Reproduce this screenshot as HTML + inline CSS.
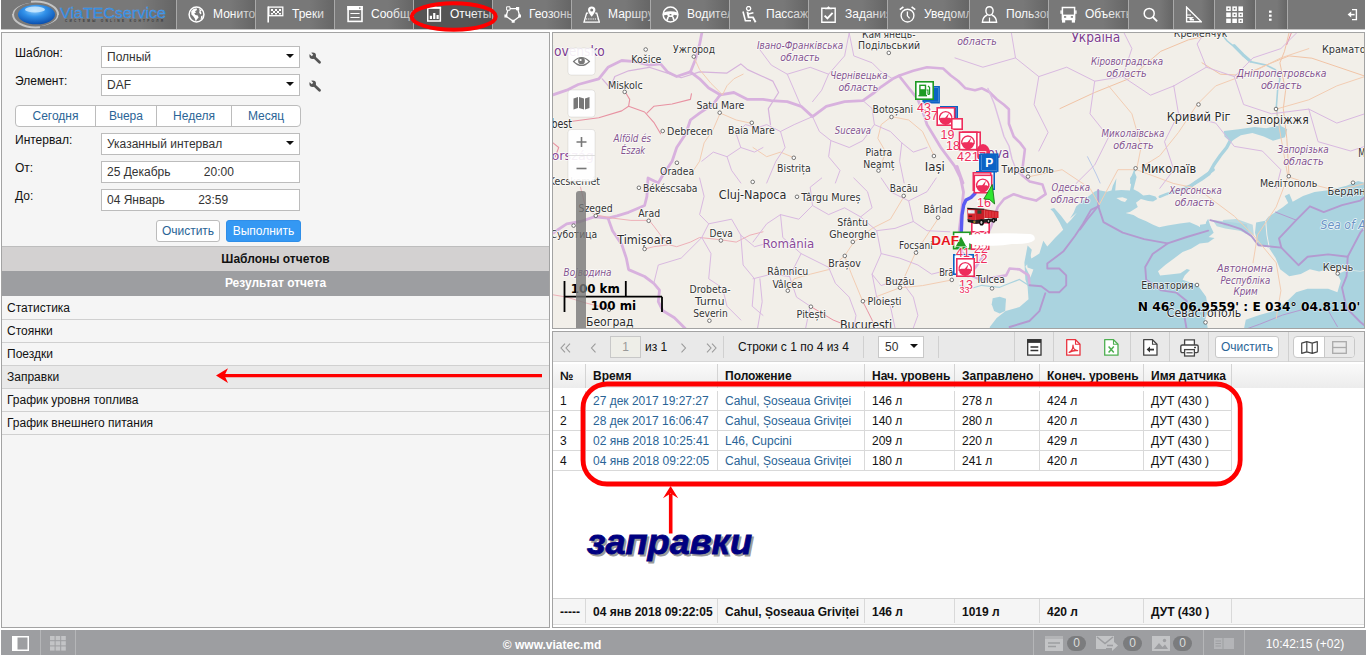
<!DOCTYPE html>
<html><head><meta charset="utf-8">
<style>
*{box-sizing:border-box;margin:0;padding:0}
html,body{width:1366px;height:655px;overflow:hidden;background:#fff;font-family:"Liberation Sans",sans-serif;font-size:12px;color:#111}
.abs{position:absolute}
#top{position:absolute;left:0;top:0;width:1365px;height:29px;background:#787878;overflow:hidden}
.mi{position:absolute;top:0;height:29px;overflow:hidden;color:#fff;font-size:12px;line-height:28px;white-space:nowrap;border-left:1px solid #a9a9a9}
.mi:after{content:"";position:absolute;right:0;top:0;width:32%;height:100%;background:linear-gradient(to right,rgba(70,70,70,0),rgba(70,70,70,.36))}
.mi svg{position:absolute;left:11px;top:6px;width:17px;height:17px}
.mi span{position:absolute;left:36px;top:0}
.mi.act{background:#555}
.nog:after{display:none}
#lp{position:absolute;left:1px;top:32px;width:549px;height:596px;border:1px solid #a3a3a3;background:#f5f5f5}
.lbl{position:absolute;left:13px;font-size:12px;color:#111}
.sel{position:absolute;left:99px;width:199px;height:22px;border:1px solid #bcbcbc;background:#fff;font-size:12px;line-height:20px;padding-left:5px;color:#333;white-space:nowrap}
.sel:after{content:"";position:absolute;right:5px;top:7px;border:4px solid transparent;border-top:4px solid #111;border-bottom:0}
.inp{position:absolute;left:99px;width:199px;height:22px;border:1px solid #bcbcbc;background:#fff;font-size:12px;line-height:20px;padding-left:5px;color:#333;white-space:pre}
.hdr{position:absolute;left:0;width:547px;text-align:center;font-weight:bold;font-size:12px}
.row{position:absolute;left:0;width:547px;height:23px;line-height:22px;padding-left:5px;border-bottom:1px solid #d0d0d0;font-size:12px;color:#111}
#bot{position:absolute;left:1px;top:630px;width:1365px;height:25px;background:#9d9ea1;color:#fff}
#map{position:absolute;left:552px;top:32px;width:813px;height:297px;border:1px solid #a3a3a3;background:#f2efe9;overflow:hidden}
#tp{position:absolute;left:552px;top:331px;width:813px;height:297px;border:1px solid #a3a3a3;background:#fff;overflow:hidden}

#tb{position:absolute;left:0;top:0;width:811px;height:30px;background:#e9e9e9;border-bottom:1px solid #d6d6d6}
.tsep{position:absolute;top:4px;height:22px;width:1px;background:#d0d0d0}
.nav{position:absolute;top:6px;font-size:17px;line-height:17px;color:#9a9a9a;font-family:"DejaVu Sans",sans-serif}
.th{position:absolute;top:32px;height:24px;line-height:25px;font-weight:bold;font-size:12px;color:#111;background:linear-gradient(#fafafa,#ececec);border-right:1px solid #d4d4d4;padding-left:7px;white-space:nowrap;overflow:hidden}
.tr{position:absolute;left:0;width:680px;height:20px}
.td{position:absolute;top:0;height:20px;line-height:20px;font-size:12px;color:#111;padding-left:7px;border-right:1px solid #d9d9d9;border-bottom:1px solid #d9d9d9;white-space:nowrap;overflow:hidden}
.td.b{color:#2a6496}
.tf .td{font-weight:bold;height:24px;line-height:27px;border-bottom:0;background:#f5f5f5}
.bdg{position:absolute;top:6px;width:19px;height:15px;border-radius:8px;background:#7b7c7e;color:#dcdcdc;font-size:12px;line-height:15px;text-align:center}
</style></head><body>
<div id="top">
<div id="logo" class="abs" style="left:0;top:0;width:176px;height:29px;border-left:1px solid #fff;background:linear-gradient(to right,rgba(0,0,0,0) 80%,rgba(0,0,0,.16) 100%)">
<svg class="abs" style="left:0;top:0" width="175" height="29" viewBox="0 0 175 29">
<defs><radialGradient id="lg1" cx="0.45" cy="0.3" r="0.7"><stop offset="0" stop-color="#8fd0ff"/><stop offset="0.45" stop-color="#2f8fe8"/><stop offset="1" stop-color="#0b4fae"/></radialGradient></defs>
<ellipse cx="34.5" cy="14.5" rx="22.5" ry="13" fill="none" stroke="#c4c4c4" stroke-width="2"/>
<path d="M10 14 A24 13 0 0 1 30 1.2" fill="none" stroke="#787878" stroke-width="3"/>
<path d="M59 15 A24 13 0 0 1 39 27.8" fill="none" stroke="#787878" stroke-width="3"/>
<ellipse cx="35.5" cy="14.5" rx="18.5" ry="9.8" fill="url(#lg1)"/>
<ellipse cx="34" cy="9.5" rx="10" ry="3" fill="#d8efff" opacity=".75"/>
<text x="59" y="18.4" font-family="Liberation Sans, sans-serif" font-size="15" fill="#2b85dd" textLength="106" lengthAdjust="spacingAndGlyphs" stroke="#5aa5ee" stroke-width=".3">ViaTECservice</text>
<text x="64" y="22" font-family="Liberation Sans, sans-serif" font-size="3.2" font-weight="bold" fill="#3a3a3a" textLength="98" lengthAdjust="spacing">СИСТЕМЫ ONLINE КОНТРОЛЯ</text>
</svg></div>
<div class="mi" style="left:176px;width:79px"><svg viewBox="0 0 17 17" id="ic0"><circle cx="8.5" cy="8.5" r="7.4" fill="none" stroke="#fff" stroke-width="1.5"/><path d="M3.2 5.2 L5.5 3 L8.5 2.2 L9 4 L7 5.2 L8 6.5 L6.2 7.5 L7.5 9 L9.8 9.6 L10.6 11.4 L8.8 13.6 L7.8 15.4 L6.8 12.6 L5.2 10.2 L3.4 8.4 Z M11 2.5 L13.8 4.4 L12.6 5.4 L13.6 7.2 L12.4 8.4 L11.2 6.6 L11.6 4.6 Z M13.2 10 L14.8 9.6 L14 12.4 L12.6 13.4 Z" fill="#fff"/></svg><span>Мониторинг</span></div>
<div class="mi" style="left:255px;width:79px"><svg viewBox="0 0 17 17" id="ic1"><path d="M1.2 0.5 V16.5" stroke="#fff" stroke-width="1.6" fill="none"/><rect x="1.8" y="1.1" width="14" height="8.6" fill="none" stroke="#fff" stroke-width="1.3"/><path d="M4 3h2v2h-2z M8 3h2v2h-2z M12 3h2v2h-2z M6 5h2v2h-2z M10 5h2v2h-2z M4 7h2v1.5h-2z M8 7h2v1.5h-2z M12 7h2v1.5h-2z" fill="#fff"/></svg><span>Треки</span></div>
<div class="mi" style="left:334px;width:79px"><svg viewBox="0 0 17 17" id="ic2"><rect x="2.1" y=".7" width="13.9" height="14.7" fill="none" stroke="#fff" stroke-width="1.6"/><rect x="1.3" y="-.1" width="15.5" height="4.2" fill="#fff"/><circle cx="13.8" cy="2" r=".85" fill="#787878"/><path d="M4.4 7.5 H13.6 M4.4 11.5 H13.6" stroke="#fff" stroke-width="1.1"/></svg><span>Сообщения</span></div>
<div class="mi act" style="left:413px;width:79px"><svg viewBox="0 0 17 17" id="ic3"><rect x="2.75" y="1.6" width="12.6" height="13.4" fill="none" stroke="#fff" stroke-width="1.5"/><path d="M5.6 1 L9 -.5 L12.4 1 Z" fill="#fff"/><rect x="2" y=".8" width="14.1" height="2" fill="#fff"/><path d="M5.9 12.9 V9.7 M9.25 12.9 V6.9 M12.6 12.9 V8.9" stroke="#fff" stroke-width="2.2"/></svg><span>Отчеты</span></div>
<div class="mi" style="left:492px;width:79px"><svg viewBox="0 0 17 17" id="ic4"><path d="M4.4 2.6 L13.6 2.6 L15.8 10.2 L9.2 15.2 L2 10.2 Z" fill="none" stroke="#fff" stroke-width="1.3"/><path d="M2.6 .8h3.4v3.4h-3.4z" fill="#787878" stroke="#fff" stroke-width="1"/><path d="M12 1h3.2v3.2h-3.2z M14.2 8.6h3v3h-3z M7.7 13.7h3v3h-3z M.4 8.6h3v3h-3z" fill="#fff"/></svg><span>Геозоны</span></div>
<div class="mi" style="left:571px;width:79px"><svg viewBox="0 0 17 17" id="ic5"><path d="M5.2 7.2 H3.6 L1 16.2 H16.4 L13.8 7.2 H12.2" fill="none" stroke="#fff" stroke-width="1.3"/><path d="M8.7 0.4 A3.7 3.7 0 0 0 5 4.1 C5 6.6 8.7 10.8 8.7 10.8 C8.7 10.8 12.4 6.6 12.4 4.1 A3.7 3.7 0 0 0 8.7 0.4 Z M8.7 2.6 A1.5 1.5 0 0 1 8.7 5.6 A1.5 1.5 0 0 1 8.7 2.6 Z" fill="#fff" fill-rule="evenodd"/><path d="M3 13 H14.6" stroke="#fff" stroke-width="1.2" stroke-dasharray="1.2 1"/></svg><span>Маршруты</span></div>
<div class="mi" style="left:650px;width:79px"><svg viewBox="0 0 17 17" id="ic6"><circle cx="8.5" cy="8.5" r="7.4" fill="none" stroke="#fff" stroke-width="1.5"/><path d="M1.4 6.6 Q8.5 4 15.6 6.6 L15.6 9.4 L11.8 8.8 L11 11 L6 11 L5.2 8.8 L1.4 9.4 Z" fill="#fff"/><path d="M6.2 11 L4.8 14.8 M10.8 11 L12.2 14.8" stroke="#fff" stroke-width="1.7"/><rect x="7.6" y="8" width="1.8" height="1.4" fill="#787878"/></svg><span>Водители</span></div>
<div class="mi" style="left:729px;width:79px"><svg viewBox="0 0 17 17" id="ic7"><circle cx="7.6" cy="2.6" r="2.1" fill="none" stroke="#fff" stroke-width="1.3"/><path d="M2 5.5 L4.4 14.8 H10" fill="none" stroke="#fff" stroke-width="1.6"/><path d="M6.4 5.6 L7.6 11.4 H12 L14.6 16.2" fill="none" stroke="#fff" stroke-width="1.9"/><path d="M7.2 8 L12.4 6.8" stroke="#fff" stroke-width="1.4"/></svg><span>Пассажиры</span></div>
<div class="mi" style="left:808px;width:79px"><svg viewBox="0 0 17 17" id="ic8"><path d="M5 2.2 H1.8 V16.2 H15.2 V2.2 H12" fill="none" stroke="#fff" stroke-width="1.4"/><path d="M5 3.2 V1.4 H7 L8.5 0.3 L10 1.4 H12 V3.2 Z" fill="#fff"/><path d="M4.6 9.6 L7.4 12.4 L12.6 6.8" fill="none" stroke="#fff" stroke-width="1.9"/></svg><span>Задания</span></div>
<div class="mi" style="left:887px;width:82px"><svg viewBox="0 0 17 17" id="ic9"><circle cx="8.5" cy="9.6" r="6.4" fill="none" stroke="#fff" stroke-width="1.4"/><path d="M8.4 5.6 V9.8 L10.6 12.4" fill="none" stroke="#fff" stroke-width="1.3"/><path d="M0.8 3.6 L4.4 0.8 M12.6 0.8 L16.2 3.6" stroke="#fff" stroke-width="1.7"/></svg><span>Уведомления</span></div>
<div class="mi" style="left:969px;width:79px"><svg viewBox="0 0 17 17" id="ic10"><path d="M8.5 0.8 C6.2 0.8 4.9 2.6 4.9 4.8 C4.9 7 6.3 9.2 8.5 9.2 C10.7 9.2 12.1 7 12.1 4.8 C12.1 2.6 10.8 0.8 8.5 0.8 Z" fill="none" stroke="#fff" stroke-width="1.4"/><path d="M6.2 9 C3.4 10.2 1.6 12 1.4 16.2 H15.6 C15.4 12 13.6 10.2 10.8 9" fill="none" stroke="#fff" stroke-width="1.4"/><path d="M8.5 11.5 V16" stroke="#fff" stroke-width="1.2"/></svg><span>Пользователи</span></div>
<div class="mi" style="left:1048px;width:80px"><svg viewBox="0 0 17 17" id="ic11"><path d="M2.4 1.4 H14.6 V13.6 H2.4 Z" fill="none" stroke="#fff" stroke-width="1.5"/><rect x="2.4" y="8.6" width="12.2" height="5" fill="#fff"/><rect x="2" y="13" width="3.2" height="3.6" fill="#fff"/><rect x="11.8" y="13" width="3.2" height="3.6" fill="#fff"/><rect x="0.4" y="4.4" width="1.4" height="3.4" fill="#fff"/><rect x="15.2" y="4.4" width="1.4" height="3.4" fill="#fff"/><rect x="4" y="10.2" width="2.2" height="1.5" fill="#787878"/><rect x="10.8" y="10.2" width="2.2" height="1.5" fill="#787878"/></svg><span>Объекты</span></div>
<div class="mi" style="left:1128px;width:45px"><svg viewBox="0 0 17 17" id="ib0" style="left:13px"><circle cx="7.2" cy="7.4" r="5" fill="none" stroke="#fff" stroke-width="1.5"/><path d="M10.8 11 L15.2 15.4" stroke="#fff" stroke-width="1.8"/></svg></div>
<div class="mi" style="left:1173px;width:41px"><svg viewBox="0 0 17 17" id="ib1" style="left:11px"><path d="M1.6 1.2 V15.8 H16.4 Z" fill="none" stroke="#fff" stroke-width="1.4"/><path d="M2 9 H6 M2 11.6 H8.4 M5 11.8 V14 H9 Z" fill="#fff" stroke="#fff" stroke-width="1"/></svg></div>
<div class="mi" style="left:1214px;width:41px"><svg viewBox="0 0 17 17" id="ib2" style="left:11px"><rect x="0.2" y="0.4" width="4.6" height="4.6" fill="#fff"/><rect x="6.3" y="0.4" width="4.6" height="4.6" fill="#fff"/><rect x="12.399999999999999" y="0.4" width="4.6" height="4.6" fill="#fff"/><rect x="0.2" y="6.5" width="4.6" height="4.6" fill="#fff"/><rect x="6.3" y="6.5" width="4.6" height="4.6" fill="#fff"/><rect x="12.399999999999999" y="6.5" width="4.6" height="4.6" fill="#fff"/><rect x="0.2" y="12.6" width="4.6" height="4.6" fill="#fff"/><rect x="6.3" y="12.6" width="4.6" height="4.6" fill="#fff"/><rect x="12.399999999999999" y="12.6" width="4.6" height="4.6" fill="#fff"/><rect x="1.7" y="1.9" width="1.6" height="1.6" fill="#787878"/><rect x="7.8" y="1.9" width="1.6" height="1.6" fill="#787878"/><rect x="7.8" y="8.0" width="1.6" height="1.6" fill="#787878"/><rect x="13.899999999999999" y="8.0" width="1.6" height="1.6" fill="#787878"/><rect x="13.899999999999999" y="14.1" width="1.6" height="1.6" fill="#787878"/></svg></div>
<div class="mi" style="left:1255px;width:32px"><svg viewBox="0 0 17 17" id="ib3" style="left:6px"><rect x="7" y="4.6" width="2.6" height="2.2" fill="#fff"/><rect x="7" y="8.6" width="2.6" height="2.2" fill="#fff"/><rect x="7" y="12.6" width="2.6" height="2.2" fill="#fff"/></svg></div>
<div class="mi nog" style="left:1287px;width:78px"><svg viewBox="0 0 17 17" id="ib4" style="left:57px"><path d="M7 3.6 H11.4 V13.6 H7" fill="none" stroke="#fff" stroke-width="1.4"/><path d="M5 8.6 H9.6" fill="none" stroke="#fff" stroke-width="1.5"/><path d="M2.6 8.6L6.2 5.6V11.6Z" fill="#fff"/></svg></div>
</div>
<div class="abs" style="left:1px;top:29px;width:1364px;height:1px;background:#c4c4c4"></div>
<div id="lp">
<div class="lbl" style="top:13px">Шаблон:</div>
<div class="sel" style="top:13px">Полный</div>
<svg class="abs wr" style="left:307px;top:18.5px" width="12" height="12" viewBox="0 0 12 12"><path d="M5 5L10.5 10.2" stroke="#555" stroke-width="2.7" stroke-linecap="round" fill="none"/><circle cx="3.7" cy="3.7" r="3.3" fill="#555"/><path d="M-.3 -1.7L4.2 2.8L2.8 4.2L-1.7 -.3Z" fill="#f5f5f5"/></svg>
<div class="lbl" style="top:41px">Элемент:</div>
<div class="sel" style="top:41px">DAF</div>
<svg class="abs wr" style="left:307px;top:46.5px" width="12" height="12" viewBox="0 0 12 12"><path d="M5 5L10.5 10.2" stroke="#555" stroke-width="2.7" stroke-linecap="round" fill="none"/><circle cx="3.7" cy="3.7" r="3.3" fill="#555"/><path d="M-.3 -1.7L4.2 2.8L2.8 4.2L-1.7 -.3Z" fill="#f5f5f5"/></svg>
<div class="abs" id="bg" style="left:13px;top:72px;width:286px;height:22px;border:1px solid #bcbcbc;border-radius:4px;background:#fff;color:#2a6496;font-size:12px;line-height:20px;text-align:center">
<div class="abs" style="left:0;width:80px;top:0;height:20px;border-right:1px solid #bcbcbc">Сегодня</div>
<div class="abs" style="left:80px;width:61px;top:0;height:20px;border-right:1px solid #bcbcbc">Вчера</div>
<div class="abs" style="left:141px;width:75px;top:0;height:20px;border-right:1px solid #bcbcbc">Неделя</div>
<div class="abs" style="left:216px;width:68px;top:0;height:20px">Месяц</div>
</div>
<div class="lbl" style="top:100px">Интервал:</div>
<div class="sel" style="top:100px">Указанный интервал</div>
<div class="lbl" style="top:128px">От:</div>
<div class="inp" style="top:128px">25 Декабрь          20:00</div>
<div class="lbl" style="top:156px">До:</div>
<div class="inp" style="top:156px">04 Январь          23:59</div>
<div class="abs" style="left:154px;top:187px;width:64px;height:22px;border:1px solid #bcbcbc;border-radius:3px;background:#fff;color:#2a6496;font-size:12px;line-height:20px;text-align:center">Очистить</div>
<div class="abs" style="left:224px;top:187px;width:75px;height:22px;border:1px solid #2f8ee8;border-radius:3px;background:#3498f3;color:#fff;font-size:12px;line-height:20px;text-align:center">Выполнить</div>
<div class="hdr" style="top:213px;height:25px;line-height:24px;background:#d3d1d1;color:#111;border-top:1px solid #bdbdbd">Шаблоны отчетов</div>
<div class="hdr" style="top:238px;height:25px;line-height:24px;background:#9d9ea1;color:#fff">Результат отчета</div>
<div class="row" style="top:264px">Статистика</div>
<div class="row" style="top:287px">Стоянки</div>
<div class="row" style="top:310px">Поездки</div>
<div class="row" style="top:333px;background:#e9e9e9">Заправки</div>
<div class="row" style="top:356px">График уровня топлива</div>
<div class="row" style="top:379px">График внешнего питания</div>
</div>
<div id="map">
<svg class="abs" style="left:0;top:0" width="811" height="295" viewBox="553 33 811 295" font-family="DejaVu Sans, sans-serif">
<rect x="553" y="33" width="811" height="295" fill="#f2efe9"/>
<path d="M989.8 329.0 L989.8 327.0 L996.7 318.1 L1005.6 311.1 L1019.5 307.1 L1028.5 299.2 L1027.5 285.3 L1033.4 269.4 L1027.5 267.5 L1026.5 259.5 L1028.5 249.6 L1031.4 258.5 L1039.4 253.6 L1043.3 240.7 L1047.3 246.6 L1055.2 237.7 L1063.2 229.8 L1059.2 221.8 L1053.3 211.9 L1050.3 208.9 L1054.2 207.9 L1061.2 215.9 L1067.1 223.8 L1071.1 219.8 L1079.0 209.9 L1087.0 204.0 L1070.0 218.6 L1073.7 212.5 L1076.1 206.4 L1082.2 201.5 L1088.3 196.6 L1094.4 191.8 L1098.1 189.9 L1106.6 191.8 L1111.5 190.5 L1112.8 185.7 L1116.4 178.3 L1115.2 190.5 L1121.3 189.9 L1129.9 190.5 L1131.1 184.4 L1129.9 178.3 L1134.7 172.2 L1136.6 177.1 L1134.7 184.4 L1133.5 189.3 L1138.4 191.8 L1143.3 195.4 L1149.4 194.8 L1155.5 196.6 L1157.3 199.1 L1153.1 201.5 L1148.2 200.9 L1140.9 199.1 L1136.0 202.8 L1137.8 207.0 L1134.7 208.9 L1129.9 211.9 L1125.6 213.1 L1133.5 215.0 L1138.4 218.0 L1145.7 221.1 L1153.1 224.7 L1159.2 227.2 L1167.7 225.4 L1179.9 223.5 L1189.7 222.3 L1198.3 226.0 L1203.2 229.6 L1205.6 224.7 L1206.1 222.1 L1208.2 218.8 L1210.3 226.3 L1212.5 232.7 L1208.2 237.0 L1214.6 238.1 L1208.2 242.4 L1199.7 243.4 L1191.1 248.8 L1182.6 252.0 L1174.0 258.4 L1165.5 264.8 L1158.0 271.2 L1160.1 275.5 L1169.7 274.4 L1180.4 273.3 L1186.8 269.1 L1190.0 270.1 L1184.7 275.5 L1182.6 279.7 L1197.5 285.1 L1206.1 296.8 L1208.2 309.7 L1205.0 320.3 L1207.1 324.6 L1208.2 331.0 Z" fill="#aad3df"/>
<path d="M1116.4 197.9 L1122.5 197.3 L1127.4 199.1 L1125.0 202.1 L1121.3 200.9 Z" fill="#f2efe9"/>
<path d="M1243.5 331.1 L1245.8 319.7 L1259.5 315.1 L1275.6 310.5 L1289.3 299.1 L1296.2 292.2 L1307.6 288.8 L1328.2 288.8 L1337.4 292.2 L1340.8 280.8 L1337.4 273.9 L1346.6 270.5 L1360.3 271.6 L1367.2 270.5 L1367.2 331.1 Z" fill="#aad3df"/>
<path d="M1367.2 183.4 L1358.0 181.1 L1346.6 185.7 L1337.4 188.0 L1328.2 190.3 L1314.5 191.9 L1303.0 196.0 L1292.7 201.8 L1289.3 193.7 L1284.7 196.0 L1288.2 202.9 L1282.4 207.5 L1275.6 212.1 L1268.7 216.6 L1265.3 220.8 L1256.1 222.4 L1255.0 232.7 L1258.4 245.3 L1268.7 247.6 L1275.6 257.9 L1280.1 269.3 L1289.3 276.2 L1300.8 273.9 L1309.9 269.3 L1319.1 271.6 L1328.2 269.3 L1337.4 268.2 L1346.6 269.8 L1360.3 270.9 L1367.2 269.8 Z" fill="#aad3df"/>
<path d="M1265.7 220.8 L1266.9 235.0 L1269.4 248.2" fill="none" stroke="#f2efe9" stroke-width="1"/>
<path d="M1212.5 219.9 L1229.6 222.1 L1246.7 224.2 L1248.8 232.7 L1238.1 230.6 L1225.3 228.5 L1216.8 226.3 Z" fill="#aad3df" opacity=".8"/>
<path d="M1200.0 224.7 L1209.2 223.5 L1213.7 232.7 L1206.9 238.4 L1200.0 237.2 Z" fill="#aad3df"/>
<path d="M1222.9 220.1 L1236.6 218.9 L1252.7 224.7 L1253.8 235.0 L1245.8 233.8 L1234.3 226.9 L1224.0 225.8 Z" fill="#aad3df" opacity=".75"/>
<path d="M1222.6 35.3 L1227.2 41.0 L1234.1 46.7 L1243.2 55.9 L1250.1 61.6 L1266.1 65.1 L1275.3 69.6 L1279.9 78.8 L1277.6 90.3 L1276.4 106.3 L1277.6 117.7 L1280.3 126.9" fill="none" stroke="#aad3df" stroke-width="1.6" stroke-linejoin="round" stroke-linecap="round" />
<path d="M1234.1 45.6 L1243.2 54.8 L1250.1 60.9" fill="none" stroke="#aad3df" stroke-width="3" stroke-linejoin="round" stroke-linecap="round" />
<path d="M1223.8 131.0 L1238.7 129.2 L1254.7 126.9 L1266.1 128.3 L1279.9 125.5 L1287.2 129.2 L1284.9 137.2 L1273.0 140.7 L1263.8 136.5 L1252.4 132.9 L1240.9 135.2 L1235.2 138.8 L1230.6 142.0 L1224.5 136.5 Z" fill="#aad3df"/>
<path d="M1231.3 138.8 L1226.7 147.5 L1220.3 155.5 L1213.9 164.7 L1208.9 173.9 L1200.9 179.6 L1195.1 183.0" fill="none" stroke="#aad3df" stroke-width="3.4" stroke-linejoin="round" stroke-linecap="round" />
<path d="M1178.5 190.6 L1166.8 193.9 L1159.8 196.7" fill="none" stroke="#aad3df" stroke-width="2.6" stroke-linejoin="round" stroke-linecap="round" />
<path d="M1195.1 183.0 L1190.6 186.5" fill="none" stroke="#aad3df" stroke-width="3" stroke-linejoin="round" stroke-linecap="round" />
<path d="M1213.4 169.7 L1201.7 178.0 L1190.1 186.0 L1178.5 190.6" fill="none" stroke="#aad3df" stroke-width="3" stroke-linejoin="round" stroke-linecap="round" />
<path d="M1087.5 156.7 L1092.1 165.8 L1096.6 175.0 L1100.1 183.0" fill="none" stroke="#b8c8e8" stroke-width="1" stroke-linejoin="round" stroke-linecap="round" />
<path d="M1135.6 168.1 L1132.1 177.3 L1131.0 183.0" fill="none" stroke="#aad3df" stroke-width="1.8" stroke-linejoin="round" stroke-linecap="round" />
<path d="M1060.0 108.6 L1094.4 92.6 L1128.7 78.8 L1160.8 51.3 L1188.3 39.9 L1220.3 33.0" fill="none" stroke="#f1c4a6" stroke-width="1" stroke-linejoin="round" stroke-linecap="round" />
<path d="M1202.0 62.8 L1220.3 74.2 L1243.2 75.4 L1266.1 65.1 L1289.0 55.9 L1311.9 58.2 L1366.0 76.5" fill="none" stroke="#f1c4a6" stroke-width="1" stroke-linejoin="round" stroke-linecap="round" />
<path d="M1289.0 33.0 L1284.5 51.3 L1279.9 62.8 L1285.6 90.3 L1283.3 108.6 L1286.8 138.4 L1289.0 175.0" fill="none" stroke="#f1c4a6" stroke-width="1" stroke-linejoin="round" stroke-linecap="round" />
<path d="M1291.3 33.0 L1286.8 44.5" fill="none" stroke="#e892a2" stroke-width="1" stroke-linejoin="round" stroke-linecap="round" />
<path d="M960.0 285.3 L971.9 288.3 L981.8 285.3 L989.8 286.3 L999.7 287.3 L1009.6 283.3 L1019.5 279.4 L1028.5 285.3" fill="none" stroke="#aad3df" stroke-width="1.2" stroke-linejoin="round" stroke-linecap="round" />
<path d="M992.7 298.2 L999.7 296.8 L1006.0 298.8 L1005.2 311.1 L999.7 313.5 L994.1 311.1 L991.7 304.2 Z" fill="#aad3df"/>
<path d="M1027.6 245.5 L1031.8 249.7 L1029.7 260.4 L1025.4 266.8 L1031.8 279.7 L1028.6 288.2 L1025.4 279.7 L1024.4 262.6 Z" fill="#aad3df"/>
<path d="M553.0 94.8 L566.7 90.2 L578.2 84.5 L598.8 78.8 L608.0 67.3 L621.7 60.5 L635.4 61.6 L649.2 65.1 L660.6 63.9 L667.5 71.9 L676.7 76.5 L690.4 71.9" fill="none" stroke="#d8b1de" stroke-width="2.8" stroke-linejoin="round" stroke-linecap="round" />
<path d="M690.4 71.9 L695.0 60.5 L699.6 44.4 L701.8 33.0" fill="none" stroke="#d8b1de" stroke-width="2.8" stroke-linejoin="round" stroke-linecap="round" />
<path d="M690.4 71.9 L699.6 78.8 L708.7 88.0 L720.2 94.8" fill="none" stroke="#d8b1de" stroke-width="2.8" stroke-linejoin="round" stroke-linecap="round" />
<path d="M720.2 94.8 L733.9 92.5 L747.6 99.4 L763.0 99.4 L771.3 100.6 L787.3 101.7 L801.1 106.3 L812.5 116.6 L826.3 106.3 L844.6 101.7 L862.9 100.6 L874.4 92.5 L881.2 86.8 L892.7 78.8 L899.6 75.4" fill="none" stroke="#d8b1de" stroke-width="2.8" stroke-linejoin="round" stroke-linecap="round" />
<path d="M720.2 94.8 L713.3 104.0 L699.6 113.1 L690.4 120.0 L685.8 133.8 L676.7 147.5 L672.1 161.2 L662.9 175.0 L658.3 183.0 L648.0 178.0 L646.9 196.3 L644.6 205.5 L628.6 212.3 L617.1 215.8 L608.0 218.1" fill="none" stroke="#d8b1de" stroke-width="2.8" stroke-linejoin="round" stroke-linecap="round" />
<path d="M608.0 218.1 L594.2 216.9 L580.5 221.5 L566.7 223.8 L553.0 233.0" fill="none" stroke="#d8b1de" stroke-width="2.8" stroke-linejoin="round" stroke-linecap="round" />
<path d="M608.0 218.1 L612.5 230.7 L621.7 244.4 L626.3 258.1 L628.6 269.6 L644.6 276.5 L653.8 283.3 L659.5 290.2 L658.3 301.7 L662.9 310.8 L674.4 317.7 L681.2 324.6 L685.8 329.1" fill="none" stroke="#d8b1de" stroke-width="2.8" stroke-linejoin="round" stroke-linecap="round" />
<path d="M899.6 75.4 L913.3 70.8 L927.0 67.3 L943.1 68.5 L950.8 75.5 L958.2 81.0 L965.5 88.3 L975.0 90.2 L982.0 88.3 L989.3 92.0 L996.7 99.3 L1004.0 104.8 L1008.9 109.3 L1008.9 123.7 L1013.7 136.5 L1020.1 142.9 L1024.9 149.3 L1023.3 162.1 L1021.7 175.0 L1029.7 181.4 L1042.5 184.6 L1045.7 194.2 L1036.1 200.6 L1023.3 197.4 L1013.7 194.2 L1004.1 199.0 L997.7 207.0 L994.5 216.6 L991.3 226.2 L989.0 231.0 L987.0 246.0 L982.0 258.0 L975.0 268.0 L968.0 276.0" fill="none" stroke="#d8b1de" stroke-width="2.6" stroke-linejoin="round" stroke-linecap="round" />
<path d="M988.0 88.4 L994.5 104.5 L999.3 120.5 L1004.0 136.5 L1009.0 146.0 L1012.0 159.0 L1017.0 171.8 L1021.7 175.0" fill="none" stroke="#dcbfe3" stroke-width="1.4" stroke-linejoin="round" stroke-linecap="round" />
<path d="M899.6 76.5 L908.7 88.0 L917.9 99.4 L922.5 110.9 L927.0 124.6 L933.9 136.0 L940.8 147.5 L947.6 156.7 L954.5 165.8 L959.1 175.0 L963.0 183.0 L957.1 166.4 L961.3 181.4 L963.5 192.1 L961.3 213.4 L959.2 230.5 L961.3 249.7 L967.7 262.6 L970.9 275.4" fill="none" stroke="#d8b1de" stroke-width="2.8" stroke-linejoin="round" stroke-linecap="round" />
<path d="M970.9 275.4 L980.6 279.7 L993.4 277.5 L1006.2 275.4 L1009.6 268.5 L1019.5 269.4 L1028.5 275.4 L1029.4 283.3" fill="none" stroke="#d8b1de" stroke-width="2.6" stroke-linejoin="round" stroke-linecap="round" />
<path d="M602.2 78.8 L610.2 88.0 L614.8 76.5 L628.6 70.8 L649.2 67.3 L667.5 73.1 L681.2 77.7 L699.6 71.9 L727.0 73.1 L740.8 63.9 L747.6 69.6 L772.8 81.1 L778.6 92.5 L768.3 108.6 L770.5 124.6" fill="none" stroke="#d6b3dc" stroke-width="1.2" stroke-linejoin="round" stroke-linecap="round" />
<path d="M1098.9 206.0 L1091.0 209.9 L1083.0 223.8 L1075.1 235.7 L1063.2 251.6 L1047.3 263.5 L1047.3 268.5 L1059.2 268.5 L1066.2 275.4 L1066.2 285.3 L1059.2 292.3 L1049.3 292.3 L1041.3 286.3 L1029.4 285.3" fill="none" stroke="#b39ad0" stroke-width="1.9" stroke-linejoin="round" stroke-linecap="round" />
<path d="M1045.3 293.3 L1039.4 311.1 L1029.4 321.0 L1009.6 327.0" fill="none" stroke="#b39ad0" stroke-width="1.9" stroke-linejoin="round" stroke-linecap="round" />
<path d="M1098.2 190.0 L1098.2 206.0 L1088.5 217.8 L1080.0 229.5" fill="none" stroke="#b39ad0" stroke-width="1.9" stroke-linejoin="round" stroke-linecap="round" />
<path d="M1098.2 206.0 L1103.5 222.1 L1122.7 232.7 L1144.1 239.1 L1167.6 243.4 L1186.8 237.0 L1208.2 230.6" fill="none" stroke="#b39ad0" stroke-width="1.9" stroke-linejoin="round" stroke-linecap="round" />
<path d="M1167.6 243.4 L1152.6 254.1 L1145.2 266.9 L1146.2 279.7 L1161.2 290.4 L1176.2 292.6 L1186.8 301.1 L1184.7 318.2 L1186.8 330.0" fill="none" stroke="#b39ad0" stroke-width="1.9" stroke-linejoin="round" stroke-linecap="round" />
<path d="M1210.3 220.1 L1227.5 224.7 L1241.2 229.2 L1251.5 236.1 L1258.4 245.3 L1281.3 247.6 L1298.5 265.2 L1307.6 256.7 L1328.2 254.4 L1347.7 256.7 L1360.3 232.7 L1366.0 225.8" fill="none" stroke="#b39ad0" stroke-width="1.9" stroke-linejoin="round" stroke-linecap="round" />
<path d="M1281.3 247.6 L1279.0 238.4 L1296.2 220.1 L1309.9 206.3 L1323.7 212.1 L1342.0 205.2 L1360.3 200.6 L1366.0 196.0" fill="none" stroke="#b39ad0" stroke-width="1.9" stroke-linejoin="round" stroke-linecap="round" />
<path d="M1347.7 256.7 L1346.6 276.2 L1342.0 287.6 L1346.6 308.2 L1360.3 322.0 L1366.0 326.6" fill="none" stroke="#b39ad0" stroke-width="1.9" stroke-linejoin="round" stroke-linecap="round" />
<path d="M1296.2 220.1 L1275.6 212.1" fill="none" stroke="#b39ad0" stroke-width="1" stroke-linejoin="round" stroke-linecap="round" />
<path d="M1243.5 330.0 L1259.5 324.3 L1282.4 315.1 L1307.6 308.2 L1328.2 310.5 L1337.4 326.6" fill="none" stroke="#b39ad0" stroke-width="1" stroke-linejoin="round" stroke-linecap="round" />
<path d="M572.5 121.2 L598.8 117.7 L621.7 110.9 L628.6 106.3 L629.7 99.4 L626.3 93.7" fill="none" stroke="#e892a2" stroke-width="1.1" stroke-linejoin="round" stroke-linecap="round" />
<path d="M628.6 106.3 L644.6 112.0 L653.8 122.3 L660.6 133.8" fill="none" stroke="#e892a2" stroke-width="1.1" stroke-linejoin="round" stroke-linecap="round" />
<path d="M646.9 113.1 L653.8 106.3 L672.1 104.0 L690.4 99.4 L691.5 93.7" fill="none" stroke="#e892a2" stroke-width="1.1" stroke-linejoin="round" stroke-linecap="round" />
<path d="M553.0 142.9 L558.7 147.5 L555.3 156.7" fill="none" stroke="#e892a2" stroke-width="1.1" stroke-linejoin="round" stroke-linecap="round" />
<path d="M580.5 187.2 L585.1 205.5 L594.2 214.6 L612.5 218.1 L630.9 220.4 L649.2 220.4 L653.8 226.1 L667.5 244.4 L676.7 246.7 L690.4 242.1 L699.6 237.5 L721.3 239.8 L736.2 242.1 L749.9 235.2 L763.0 231.8" fill="none" stroke="#eeb0b8" stroke-width="1" stroke-linejoin="round" stroke-linecap="round" />
<path d="M644.6 249.0 L653.8 246.7 L667.5 244.9" fill="none" stroke="#eeb0b8" stroke-width="1" stroke-linejoin="round" stroke-linecap="round" />
<path d="M553.0 294.8 L566.7 297.1 L585.1 302.8 L608.0 308.5" fill="none" stroke="#eeb0b8" stroke-width="1" stroke-linejoin="round" stroke-linecap="round" />
<path d="M810.2 306.2 L821.7 313.1 L833.1 320.0 L844.6 324.6" fill="none" stroke="#e892a2" stroke-width="1" stroke-linejoin="round" stroke-linecap="round" />
<path d="M862.9 301.7 L867.5 310.8 L872.1 320.0 L874.4 328.0" fill="none" stroke="#e892a2" stroke-width="1" stroke-linejoin="round" stroke-linecap="round" />
<path d="M693.8 57.0 L699.6 69.6 L711.0 83.4 L722.5 94.8 L727.0 85.7 L733.9 78.8 L743.1 74.2" fill="none" stroke="#f3cdb3" stroke-width="1" stroke-linejoin="round" stroke-linecap="round" />
<path d="M720.2 113.1 L713.3 129.2 L704.1 142.9 L699.6 161.2 L690.4 175.0" fill="none" stroke="#f3cdb3" stroke-width="1" stroke-linejoin="round" stroke-linecap="round" />
<path d="M720.2 113.1 L736.2 120.0 L752.2 123.5" fill="none" stroke="#f3cdb3" stroke-width="1" stroke-linejoin="round" stroke-linecap="round" />
<path d="M794.2 157.8 L780.5 152.1 L766.7 156.7 L753.0 147.5" fill="none" stroke="#f3cdb3" stroke-width="1" stroke-linejoin="round" stroke-linecap="round" />
<path d="M891.5 116.6 L881.2 124.6 L877.8 138.3 L885.8 152.1 L878.9 170.4" fill="none" stroke="#f3cdb3" stroke-width="1" stroke-linejoin="round" stroke-linecap="round" />
<path d="M891.5 116.6 L908.7 120.0 L922.5 131.5 L933.9 155.5" fill="none" stroke="#f3cdb3" stroke-width="1" stroke-linejoin="round" stroke-linecap="round" />
<path d="M844.6 255.9 L828.6 269.6 L810.2 274.2 L794.2 278.8 L787.3 290.2" fill="none" stroke="#f3cdb3" stroke-width="1" stroke-linejoin="round" stroke-linecap="round" />
<path d="M844.6 255.9 L853.8 242.1 L872.1 228.4 L890.4 219.2 L904.1 196.3" fill="none" stroke="#f3cdb3" stroke-width="1" stroke-linejoin="round" stroke-linecap="round" />
<path d="M844.6 255.9 L851.5 274.2 L862.9 301.7" fill="none" stroke="#f3cdb3" stroke-width="1" stroke-linejoin="round" stroke-linecap="round" />
<path d="M862.9 301.7 L881.2 294.8 L899.6 287.9 L915.6 252.4 L938.5 218.1" fill="none" stroke="#f3cdb3" stroke-width="1" stroke-linejoin="round" stroke-linecap="round" />
<path d="M899.6 287.9 L922.5 285.6 L952.2 279.9" fill="none" stroke="#f3cdb3" stroke-width="1" stroke-linejoin="round" stroke-linecap="round" />
<path d="M1029.5 176.6 L1062.1 169.7 L1090.0 188.3 L1099.3 204.6" fill="none" stroke="#f3cdb3" stroke-width="1" stroke-linejoin="round" stroke-linecap="round" />
<path d="M1099.3 204.6 L1117.9 169.7 L1136.6 169.7 L1141.2 146.4 L1131.9 113.8 L1108.6 85.9" fill="none" stroke="#f3cdb3" stroke-width="1" stroke-linejoin="round" stroke-linecap="round" />
<path d="M1136.6 169.7 L1173.8 183.6 L1197.1 188.3 L1215.7 202.3 L1234.3 216.2 L1253.0 234.8 L1276.2 262.8 L1280.9 290.7 L1276.2 318.6" fill="none" stroke="#f3cdb3" stroke-width="1" stroke-linejoin="round" stroke-linecap="round" />
<path d="M1197.1 104.5 L1215.7 85.9 L1253.0 71.9 L1280.9 57.9 L1308.8 48.6" fill="none" stroke="#f3cdb3" stroke-width="1" stroke-linejoin="round" stroke-linecap="round" />
<path d="M1276.2 109.1 L1280.9 137.1 L1287.9 176.6 L1308.8 183.6 L1336.8 190.6 L1364.7 183.6" fill="none" stroke="#f3cdb3" stroke-width="1" stroke-linejoin="round" stroke-linecap="round" />
<path d="M1287.9 176.6 L1276.2 206.9 L1257.6 234.8 L1253.0 262.8" fill="none" stroke="#f3cdb3" stroke-width="1" stroke-linejoin="round" stroke-linecap="round" />
<path d="M1197.1 104.5 L1178.5 132.4 L1159.8 155.7 L1141.2 167.3" fill="none" stroke="#f3cdb3" stroke-width="1" stroke-linejoin="round" stroke-linecap="round" />
<path d="M1276.2 109.1 L1308.8 99.8 L1336.8 85.9 L1364.7 76.6" fill="none" stroke="#f3cdb3" stroke-width="1" stroke-linejoin="round" stroke-linecap="round" />
<path d="M701.8 161.2 L713.3 152.1 L727.0 156.7 L740.8 147.5 L754.5 152.1 L763.0 147.5" fill="none" stroke="#d9b9e1" stroke-width="1" stroke-linejoin="round" stroke-linecap="round" />
<path d="M727.0 156.7 L731.6 170.4 L740.8 183.0" fill="none" stroke="#d9b9e1" stroke-width="1" stroke-linejoin="round" stroke-linecap="round" />
<path d="M740.8 147.5 L736.2 133.8 L745.4 124.6 L763.0 129.2" fill="none" stroke="#d9b9e1" stroke-width="1" stroke-linejoin="round" stroke-linecap="round" />
<path d="M753.0 129.2 L766.7 124.6 L780.5 131.5 L794.2 124.6 L812.5 116.6" fill="none" stroke="#d9b9e1" stroke-width="1" stroke-linejoin="round" stroke-linecap="round" />
<path d="M780.5 131.5 L785.1 147.5 L775.9 161.2 L766.7 183.0" fill="none" stroke="#d9b9e1" stroke-width="1" stroke-linejoin="round" stroke-linecap="round" />
<path d="M812.5 116.6 L819.4 131.5 L830.9 140.6 L828.6 156.7 L840.0 170.4 L835.4 183.0" fill="none" stroke="#d9b9e1" stroke-width="1" stroke-linejoin="round" stroke-linecap="round" />
<path d="M830.9 140.6 L849.2 147.5 L862.9 140.6 L874.4 124.6 L872.1 108.6 L862.9 100.6" fill="none" stroke="#d9b9e1" stroke-width="1" stroke-linejoin="round" stroke-linecap="round" />
<path d="M874.4 124.6 L890.4 131.5 L901.8 142.9 L913.3 152.1 L927.0 147.5" fill="none" stroke="#d9b9e1" stroke-width="1" stroke-linejoin="round" stroke-linecap="round" />
<path d="M901.8 142.9 L899.6 161.2 L904.1 183.0" fill="none" stroke="#d9b9e1" stroke-width="1" stroke-linejoin="round" stroke-linecap="round" />
<path d="M757.6 46.7 L771.3 65.1 L787.3 74.2 L794.2 90.2 L801.1 106.3" fill="none" stroke="#d9b9e1" stroke-width="1" stroke-linejoin="round" stroke-linecap="round" />
<path d="M787.3 74.2 L810.2 67.3 L828.6 74.2 L844.6 55.9 L849.2 33.0" fill="none" stroke="#d9b9e1" stroke-width="1" stroke-linejoin="round" stroke-linecap="round" />
<path d="M828.6 74.2 L821.7 90.2 L812.5 101.7" fill="none" stroke="#d9b9e1" stroke-width="1" stroke-linejoin="round" stroke-linecap="round" />
<path d="M849.2 33.0 L853.8 55.9 L872.1 62.8 L881.2 71.9 L892.7 78.8" fill="none" stroke="#d9b9e1" stroke-width="1" stroke-linejoin="round" stroke-linecap="round" />
<path d="M699.6 178.0 L704.1 196.3 L699.6 214.6 L708.7 223.8 L701.8 237.5" fill="none" stroke="#d9b9e1" stroke-width="1" stroke-linejoin="round" stroke-linecap="round" />
<path d="M701.8 237.5 L681.2 258.1 L658.3 265.0 L653.8 283.3" fill="none" stroke="#d9b9e1" stroke-width="1" stroke-linejoin="round" stroke-linecap="round" />
<path d="M701.8 237.5 L711.0 253.6 L708.7 278.8 L722.5 287.9 L727.0 306.2 L740.8 320.0" fill="none" stroke="#d9b9e1" stroke-width="1" stroke-linejoin="round" stroke-linecap="round" />
<path d="M708.7 223.8 L731.6 219.2 L740.8 235.2 L754.5 246.7 L763.0 244.4" fill="none" stroke="#d9b9e1" stroke-width="1" stroke-linejoin="round" stroke-linecap="round" />
<path d="M740.8 235.2 L743.1 265.0 L754.5 278.8 L752.2 306.2 L763.0 315.4" fill="none" stroke="#d9b9e1" stroke-width="1" stroke-linejoin="round" stroke-linecap="round" />
<path d="M753.0 242.1 L766.7 223.8 L780.5 214.6 L798.8 219.2 L812.5 205.5 L810.2 187.2 L821.7 178.0" fill="none" stroke="#d9b9e1" stroke-width="1" stroke-linejoin="round" stroke-linecap="round" />
<path d="M780.5 214.6 L782.8 237.5 L801.1 253.6 L828.6 267.3" fill="none" stroke="#d9b9e1" stroke-width="1" stroke-linejoin="round" stroke-linecap="round" />
<path d="M812.5 205.5 L828.6 214.6 L844.6 207.8 L860.6 216.9 L872.1 207.8 L867.5 191.7 L853.8 178.0" fill="none" stroke="#d9b9e1" stroke-width="1" stroke-linejoin="round" stroke-linecap="round" />
<path d="M860.6 216.9 L876.7 230.7 L881.2 253.6 L872.1 274.2 L881.2 285.6 L899.6 278.8" fill="none" stroke="#d9b9e1" stroke-width="1" stroke-linejoin="round" stroke-linecap="round" />
<path d="M876.7 230.7 L895.0 228.4 L913.3 221.5 L927.0 230.7 L949.9 231.8" fill="none" stroke="#d9b9e1" stroke-width="1" stroke-linejoin="round" stroke-linecap="round" />
<path d="M881.2 253.6 L899.6 258.1 L917.9 265.0 L931.6 274.2 L949.9 269.6" fill="none" stroke="#d9b9e1" stroke-width="1" stroke-linejoin="round" stroke-linecap="round" />
<path d="M828.6 267.3 L835.4 283.3 L849.2 297.1 L856.0 315.4 L853.8 328.0" fill="none" stroke="#d9b9e1" stroke-width="1" stroke-linejoin="round" stroke-linecap="round" />
<path d="M753.0 278.8 L771.3 274.2 L789.6 276.5 L801.1 253.6" fill="none" stroke="#d9b9e1" stroke-width="1" stroke-linejoin="round" stroke-linecap="round" />
<path d="M759.9 278.8 L762.2 301.7 L757.6 328.0" fill="none" stroke="#d9b9e1" stroke-width="1" stroke-linejoin="round" stroke-linecap="round" />
<path d="M789.6 276.5 L796.5 297.1 L810.2 306.2 L805.7 328.0" fill="none" stroke="#d9b9e1" stroke-width="1" stroke-linejoin="round" stroke-linecap="round" />
<path d="M872.1 274.2 L876.7 297.1 L890.4 306.2 L895.0 328.0" fill="none" stroke="#d9b9e1" stroke-width="1" stroke-linejoin="round" stroke-linecap="round" />
<path d="M899.6 278.8 L913.3 297.1 L917.9 315.4 L913.3 328.0" fill="none" stroke="#d9b9e1" stroke-width="1" stroke-linejoin="round" stroke-linecap="round" />
<path d="M881.2 178.0 L890.4 191.7 L908.7 200.9 L927.0 191.7 L936.2 178.0" fill="none" stroke="#d9b9e1" stroke-width="1" stroke-linejoin="round" stroke-linecap="round" />
<path d="M908.7 200.9 L913.3 221.5" fill="none" stroke="#d9b9e1" stroke-width="1" stroke-linejoin="round" stroke-linecap="round" />
<path d="M955.0 57.9 L982.9 67.2 L1015.5 57.9 L1038.8 76.6 L1066.7 67.2 L1094.7 81.2 L1122.6 76.6 L1150.5 95.2 L1173.8 85.9" fill="none" stroke="#d9b9e1" stroke-width="1" stroke-linejoin="round" stroke-linecap="round" />
<path d="M1038.8 76.6 L1034.1 104.5 L1048.1 132.4 L1038.8 151.0" fill="none" stroke="#d9b9e1" stroke-width="1" stroke-linejoin="round" stroke-linecap="round" />
<path d="M1094.7 81.2 L1090.0 113.8 L1108.6 137.1 L1094.7 165.0 L1076.0 183.6" fill="none" stroke="#d9b9e1" stroke-width="1" stroke-linejoin="round" stroke-linecap="round" />
<path d="M1173.8 85.9 L1178.5 113.8 L1164.5 141.7 L1173.8 169.7 L1159.8 188.3" fill="none" stroke="#d9b9e1" stroke-width="1" stroke-linejoin="round" stroke-linecap="round" />
<path d="M1173.8 85.9 L1206.4 67.2 L1234.3 76.6 L1253.0 57.9 L1280.9 48.6 L1299.5 30.0" fill="none" stroke="#d9b9e1" stroke-width="1" stroke-linejoin="round" stroke-linecap="round" />
<path d="M1178.5 113.8 L1215.7 123.1 L1234.3 146.4 L1262.3 151.0 L1280.9 169.7 L1276.2 188.3" fill="none" stroke="#d9b9e1" stroke-width="1" stroke-linejoin="round" stroke-linecap="round" />
<path d="M1234.3 76.6 L1243.6 104.5 L1271.6 113.8 L1308.8 109.1 L1336.8 123.1 L1364.7 113.8" fill="none" stroke="#d9b9e1" stroke-width="1" stroke-linejoin="round" stroke-linecap="round" />
<path d="M1308.8 109.1 L1318.1 141.7 L1350.7 151.0 L1364.7 146.4" fill="none" stroke="#d9b9e1" stroke-width="1" stroke-linejoin="round" stroke-linecap="round" />
<path d="M1015.5 57.9 L1010.9 30.0" fill="none" stroke="#d9b9e1" stroke-width="1" stroke-linejoin="round" stroke-linecap="round" />
<path d="M1122.6 76.6 L1131.9 48.6 L1122.6 30.0" fill="none" stroke="#d9b9e1" stroke-width="1" stroke-linejoin="round" stroke-linecap="round" />
<path d="M1206.4 67.2 L1197.1 44.0 L1206.4 30.0" fill="none" stroke="#d9b9e1" stroke-width="1" stroke-linejoin="round" stroke-linecap="round" />
<text x="550.6" y="55.8" font-size="13.5" fill="#7d3c8f" font-style="normal" textLength="54.1" lengthAdjust="spacingAndGlyphs" stroke="#fff" stroke-opacity=".75" stroke-width="1.6" paint-order="stroke" stroke-linejoin="round">lovensko</text>
<text x="631.2" y="62.7" font-size="10.5" fill="#333" font-style="normal" textLength="30.3" lengthAdjust="spacingAndGlyphs" stroke="#fff" stroke-opacity=".75" stroke-width="1.6" paint-order="stroke" stroke-linejoin="round">Košice</text>
<text x="673.1" y="53.4" font-size="10.5" fill="#333" font-style="normal" textLength="41.9" lengthAdjust="spacingAndGlyphs" stroke="#fff" stroke-opacity=".75" stroke-width="1.6" paint-order="stroke" stroke-linejoin="round">Ужгород</text>
<text x="607.9" y="88.8" font-size="10.5" fill="#333" font-style="normal" textLength="34.9" lengthAdjust="spacingAndGlyphs" stroke="#fff" stroke-opacity=".75" stroke-width="1.6" paint-order="stroke" stroke-linejoin="round">Miskolc</text>
<text x="757.0" y="49.0" font-size="10" fill="#84548f" font-style="italic" textLength="86.2" lengthAdjust="spacingAndGlyphs" stroke="#fff" stroke-opacity=".75" stroke-width="1.6" paint-order="stroke" stroke-linejoin="round">Івано-Франківська</text>
<text x="780.3" y="60.6" font-size="10" fill="#84548f" font-style="italic" textLength="39.6" lengthAdjust="spacingAndGlyphs" stroke="#fff" stroke-opacity=".75" stroke-width="1.6" paint-order="stroke" stroke-linejoin="round">область</text>
<text x="861.9" y="37.5" font-size="10.5" fill="#333" font-style="normal" textLength="53.6" lengthAdjust="spacingAndGlyphs" stroke="#fff" stroke-opacity=".75" stroke-width="1.6" paint-order="stroke" stroke-linejoin="round">Кам'янець-</text>
<text x="858.1" y="49.2" font-size="10.5" fill="#333" font-style="normal" textLength="62.0" lengthAdjust="spacingAndGlyphs" stroke="#fff" stroke-opacity=".75" stroke-width="1.6" paint-order="stroke" stroke-linejoin="round">Подільський</text>
<text x="830.2" y="78.8" font-size="10" fill="#84548f" font-style="italic" textLength="57.3" lengthAdjust="spacingAndGlyphs" stroke="#fff" stroke-opacity=".75" stroke-width="1.6" paint-order="stroke" stroke-linejoin="round">Чернівецька</text>
<text x="838.6" y="90.9" font-size="10" fill="#84548f" font-style="italic" textLength="39.6" lengthAdjust="spacingAndGlyphs" stroke="#fff" stroke-opacity=".75" stroke-width="1.6" paint-order="stroke" stroke-linejoin="round">область</text>
<text x="696.4" y="109.3" font-size="10.5" fill="#333" font-style="normal" textLength="48.0" lengthAdjust="spacingAndGlyphs" stroke="#fff" stroke-opacity=".75" stroke-width="1.6" paint-order="stroke" stroke-linejoin="round">Satu Mare</text>
<text x="872.6" y="113.0" font-size="10.5" fill="#333" font-style="normal" textLength="40.5" lengthAdjust="spacingAndGlyphs" stroke="#fff" stroke-opacity=".75" stroke-width="1.6" paint-order="stroke" stroke-linejoin="round">Botoșani</text>
<text x="667.1" y="134.9" font-size="10.5" fill="#333" font-style="normal" textLength="45.7" lengthAdjust="spacingAndGlyphs" stroke="#fff" stroke-opacity=".75" stroke-width="1.6" paint-order="stroke" stroke-linejoin="round">Debrecen</text>
<text x="728.1" y="134.0" font-size="10.5" fill="#333" font-style="normal" textLength="46.6" lengthAdjust="spacingAndGlyphs" stroke="#fff" stroke-opacity=".75" stroke-width="1.6" paint-order="stroke" stroke-linejoin="round">Baia Mare</text>
<text x="834.8" y="133.8" font-size="10" fill="#84548f" font-style="italic" textLength="36.3" lengthAdjust="spacingAndGlyphs" stroke="#fff" stroke-opacity=".75" stroke-width="1.6" paint-order="stroke" stroke-linejoin="round">Suceava</text>
<text x="613.5" y="141.7" font-size="10" fill="#84548f" font-style="italic" textLength="37.7" lengthAdjust="spacingAndGlyphs" stroke="#fff" stroke-opacity=".75" stroke-width="1.6" paint-order="stroke" stroke-linejoin="round">Alföld és</text>
<text x="621.0" y="153.8" font-size="10" fill="#84548f" font-style="italic" textLength="24.2" lengthAdjust="spacingAndGlyphs" stroke="#fff" stroke-opacity=".75" stroke-width="1.6" paint-order="stroke" stroke-linejoin="round">Észak</text>
<text x="865.6" y="155.9" font-size="10.5" fill="#333" font-style="normal" textLength="26.6" lengthAdjust="spacingAndGlyphs" stroke="#fff" stroke-opacity=".75" stroke-width="1.6" paint-order="stroke" stroke-linejoin="round">Piatra</text>
<text x="863.3" y="168.0" font-size="10.5" fill="#333" font-style="normal" textLength="31.2" lengthAdjust="spacingAndGlyphs" stroke="#fff" stroke-opacity=".75" stroke-width="1.6" paint-order="stroke" stroke-linejoin="round">Neamț</text>
<text x="924.8" y="170.6" font-size="12.5" fill="#2b2b2b" font-style="normal" textLength="20.0" lengthAdjust="spacingAndGlyphs" stroke="#fff" stroke-opacity=".75" stroke-width="1.6" paint-order="stroke" stroke-linejoin="round">Iași</text>
<text x="660.1" y="175.0" font-size="10.5" fill="#333" font-style="normal" textLength="34.0" lengthAdjust="spacingAndGlyphs" stroke="#fff" stroke-opacity=".75" stroke-width="1.6" paint-order="stroke" stroke-linejoin="round">Oradea</text>
<text x="777.1" y="171.7" font-size="10.5" fill="#333" font-style="normal" textLength="33.6" lengthAdjust="spacingAndGlyphs" stroke="#fff" stroke-opacity=".75" stroke-width="1.6" paint-order="stroke" stroke-linejoin="round">Bistrița</text>
<text x="548.7" y="185.2" font-size="10.5" fill="#333" font-style="normal" textLength="51.3" lengthAdjust="spacingAndGlyphs" stroke="#fff" stroke-opacity=".75" stroke-width="1.6" paint-order="stroke" stroke-linejoin="round">Kecskemét</text>
<text x="642.9" y="192.2" font-size="10.5" fill="#333" font-style="normal" textLength="54.5" lengthAdjust="spacingAndGlyphs" stroke="#fff" stroke-opacity=".75" stroke-width="1.6" paint-order="stroke" stroke-linejoin="round">Békéscsaba</text>
<text x="718.8" y="199.0" font-size="12.5" fill="#2b2b2b" font-style="normal" textLength="67.6" lengthAdjust="spacingAndGlyphs" stroke="#fff" stroke-opacity=".75" stroke-width="1.6" paint-order="stroke" stroke-linejoin="round">Cluj-Napoca</text>
<text x="801.3" y="200.6" font-size="10.5" fill="#333" font-style="normal" textLength="59.2" lengthAdjust="spacingAndGlyphs" stroke="#fff" stroke-opacity=".75" stroke-width="1.6" paint-order="stroke" stroke-linejoin="round">Târgu Mureș</text>
<text x="889.8" y="192.2" font-size="10.5" fill="#333" font-style="normal" textLength="28.0" lengthAdjust="spacingAndGlyphs" stroke="#fff" stroke-opacity=".75" stroke-width="1.6" paint-order="stroke" stroke-linejoin="round">Bacău</text>
<text x="578.6" y="212.3" font-size="10.5" fill="#333" font-style="normal" textLength="34.0" lengthAdjust="spacingAndGlyphs" stroke="#fff" stroke-opacity=".75" stroke-width="1.6" paint-order="stroke" stroke-linejoin="round">Szeged</text>
<text x="638.2" y="216.9" font-size="10.5" fill="#333" font-style="normal" textLength="21.9" lengthAdjust="spacingAndGlyphs" stroke="#fff" stroke-opacity=".75" stroke-width="1.6" paint-order="stroke" stroke-linejoin="round">Arad</text>
<text x="923.4" y="213.2" font-size="10.5" fill="#333" font-style="normal" textLength="29.4" lengthAdjust="spacingAndGlyphs" stroke="#fff" stroke-opacity=".75" stroke-width="1.6" paint-order="stroke" stroke-linejoin="round">Bârlad</text>
<text x="837.2" y="225.8" font-size="10.5" fill="#333" font-style="normal" textLength="30.8" lengthAdjust="spacingAndGlyphs" stroke="#fff" stroke-opacity=".75" stroke-width="1.6" paint-order="stroke" stroke-linejoin="round">Sfântu</text>
<text x="829.2" y="237.9" font-size="10.5" fill="#333" font-style="normal" textLength="46.6" lengthAdjust="spacingAndGlyphs" stroke="#fff" stroke-opacity=".75" stroke-width="1.6" paint-order="stroke" stroke-linejoin="round">Gheorghe</text>
<text x="550.6" y="237.9" font-size="10.5" fill="#333" font-style="normal" textLength="46.6" lengthAdjust="spacingAndGlyphs" stroke="#fff" stroke-opacity=".75" stroke-width="1.6" paint-order="stroke" stroke-linejoin="round">Суботица</text>
<text x="617.2" y="244.2" font-size="12.5" fill="#2b2b2b" font-style="normal" textLength="55.0" lengthAdjust="spacingAndGlyphs" stroke="#fff" stroke-opacity=".75" stroke-width="1.6" paint-order="stroke" stroke-linejoin="round">Timișoara</text>
<text x="709.5" y="236.9" font-size="10.5" fill="#333" font-style="normal" textLength="23.3" lengthAdjust="spacingAndGlyphs" stroke="#fff" stroke-opacity=".75" stroke-width="1.6" paint-order="stroke" stroke-linejoin="round">Deva</text>
<text x="762.6" y="247.9" font-size="12.5" fill="#8a4a9a" font-style="normal" textLength="51.7" lengthAdjust="spacingAndGlyphs" stroke="#fff" stroke-opacity=".75" stroke-width="1.6" paint-order="stroke" stroke-linejoin="round">România</text>
<text x="828.3" y="266.8" font-size="10.5" fill="#333" font-style="normal" textLength="32.6" lengthAdjust="spacingAndGlyphs" stroke="#fff" stroke-opacity=".75" stroke-width="1.6" paint-order="stroke" stroke-linejoin="round">Brașov</text>
<text x="767.3" y="275.2" font-size="10.5" fill="#333" font-style="normal" textLength="41.0" lengthAdjust="spacingAndGlyphs" stroke="#fff" stroke-opacity=".75" stroke-width="1.6" paint-order="stroke" stroke-linejoin="round">Râmnicu</text>
<text x="772.4" y="287.7" font-size="10.5" fill="#333" font-style="normal" textLength="30.3" lengthAdjust="spacingAndGlyphs" stroke="#fff" stroke-opacity=".75" stroke-width="1.6" paint-order="stroke" stroke-linejoin="round">Vâlcea</text>
<text x="885.2" y="284.5" font-size="10.5" fill="#333" font-style="normal" textLength="29.4" lengthAdjust="spacingAndGlyphs" stroke="#fff" stroke-opacity=".75" stroke-width="1.6" paint-order="stroke" stroke-linejoin="round">Buzău</text>
<text x="563.6" y="276.4" font-size="10" fill="#84548f" font-style="italic" textLength="48.0" lengthAdjust="spacingAndGlyphs" stroke="#fff" stroke-opacity=".75" stroke-width="1.6" paint-order="stroke" stroke-linejoin="round">Војводина</text>
<text x="689.5" y="293.3" font-size="10.5" fill="#333" font-style="normal" textLength="41.0" lengthAdjust="spacingAndGlyphs" stroke="#fff" stroke-opacity=".75" stroke-width="1.6" paint-order="stroke" stroke-linejoin="round">Drobeta-</text>
<text x="695.0" y="305.0" font-size="10.5" fill="#333" font-style="normal" textLength="29.4" lengthAdjust="spacingAndGlyphs" stroke="#fff" stroke-opacity=".75" stroke-width="1.6" paint-order="stroke" stroke-linejoin="round">Turnu</text>
<text x="693.2" y="317.1" font-size="10.5" fill="#333" font-style="normal" textLength="34.5" lengthAdjust="spacingAndGlyphs" stroke="#fff" stroke-opacity=".75" stroke-width="1.6" paint-order="stroke" stroke-linejoin="round">Severin</text>
<text x="867.5" y="305.0" font-size="10.5" fill="#333" font-style="normal" textLength="34.0" lengthAdjust="spacingAndGlyphs" stroke="#fff" stroke-opacity=".75" stroke-width="1.6" paint-order="stroke" stroke-linejoin="round">Ploiești</text>
<text x="796.6" y="318.0" font-size="10.5" fill="#333" font-style="normal" textLength="29.4" lengthAdjust="spacingAndGlyphs" stroke="#fff" stroke-opacity=".75" stroke-width="1.6" paint-order="stroke" stroke-linejoin="round">Pitești</text>
<text x="840.0" y="329.0" font-size="12.5" fill="#2b2b2b" font-style="normal" textLength="52.2" lengthAdjust="spacingAndGlyphs" stroke="#fff" stroke-opacity=".75" stroke-width="1.6" paint-order="stroke" stroke-linejoin="round">București</text>
<text x="586.0" y="325.7" font-size="12.5" fill="#2b2b2b" font-style="normal" textLength="47.5" lengthAdjust="spacingAndGlyphs" stroke="#fff" stroke-opacity=".75" stroke-width="1.6" paint-order="stroke" stroke-linejoin="round">Београд</text>
<text x="551.5" y="127.7" font-size="12.5" fill="#2b2b2b" font-style="normal" textLength="20.5" lengthAdjust="spacingAndGlyphs" stroke="#fff" stroke-opacity=".75" stroke-width="1.6" paint-order="stroke" stroke-linejoin="round">best</text>
<text x="551.5" y="160.3" font-size="12.5" fill="#8a4a9a" font-style="normal" textLength="42.4" lengthAdjust="spacingAndGlyphs" stroke="#fff" stroke-opacity=".75" stroke-width="1.6" paint-order="stroke" stroke-linejoin="round">ország</text>
<text x="957.3" y="45.2" font-size="10" fill="#84548f" font-style="italic" textLength="39.6" lengthAdjust="spacingAndGlyphs" stroke="#fff" stroke-opacity=".75" stroke-width="1.6" paint-order="stroke" stroke-linejoin="round">область</text>
<text x="1071.4" y="41.8" font-size="13.5" fill="#7d3c8f" font-style="normal" textLength="48.9" lengthAdjust="spacingAndGlyphs" stroke="#fff" stroke-opacity=".75" stroke-width="1.6" paint-order="stroke" stroke-linejoin="round">Україна</text>
<text x="1173.8" y="36.6" font-size="10.5" fill="#333" font-style="normal" textLength="53.5" lengthAdjust="spacingAndGlyphs" stroke="#fff" stroke-opacity=".75" stroke-width="1.6" paint-order="stroke" stroke-linejoin="round">Кременчук</text>
<text x="1321.9" y="53.3" font-size="10.5" fill="#333" font-style="normal" textLength="43.8" lengthAdjust="spacingAndGlyphs" stroke="#fff" stroke-opacity=".75" stroke-width="1.6" paint-order="stroke" stroke-linejoin="round">Крамато</text>
<text x="1090.9" y="65.3" font-size="10" fill="#84548f" font-style="italic" textLength="72.2" lengthAdjust="spacingAndGlyphs" stroke="#fff" stroke-opacity=".75" stroke-width="1.6" paint-order="stroke" stroke-linejoin="round">Кіровоградська</text>
<text x="1106.3" y="76.9" font-size="10" fill="#84548f" font-style="italic" textLength="40.5" lengthAdjust="spacingAndGlyphs" stroke="#fff" stroke-opacity=".75" stroke-width="1.6" paint-order="stroke" stroke-linejoin="round">область</text>
<text x="1236.7" y="76.9" font-size="10" fill="#84548f" font-style="italic" textLength="89.9" lengthAdjust="spacingAndGlyphs" stroke="#fff" stroke-opacity=".75" stroke-width="1.6" paint-order="stroke" stroke-linejoin="round">Дніпропетровська</text>
<text x="1260.9" y="88.5" font-size="10" fill="#84548f" font-style="italic" textLength="41.0" lengthAdjust="spacingAndGlyphs" stroke="#fff" stroke-opacity=".75" stroke-width="1.6" paint-order="stroke" stroke-linejoin="round">область</text>
<text x="1166.8" y="120.6" font-size="12.5" fill="#2b2b2b" font-style="normal" textLength="63.8" lengthAdjust="spacingAndGlyphs" stroke="#fff" stroke-opacity=".75" stroke-width="1.6" paint-order="stroke" stroke-linejoin="round">Кривий Ріг</text>
<text x="1246.0" y="123.9" font-size="12.5" fill="#2b2b2b" font-style="normal" textLength="62.8" lengthAdjust="spacingAndGlyphs" stroke="#fff" stroke-opacity=".75" stroke-width="1.6" paint-order="stroke" stroke-linejoin="round">Запоріжжя</text>
<text x="1101.6" y="137.0" font-size="10" fill="#84548f" font-style="italic" textLength="62.8" lengthAdjust="spacingAndGlyphs" stroke="#fff" stroke-opacity=".75" stroke-width="1.6" paint-order="stroke" stroke-linejoin="round">Миколаївська</text>
<text x="1113.3" y="149.1" font-size="10" fill="#84548f" font-style="italic" textLength="40.5" lengthAdjust="spacingAndGlyphs" stroke="#fff" stroke-opacity=".75" stroke-width="1.6" paint-order="stroke" stroke-linejoin="round">область</text>
<text x="1277.6" y="153.2" font-size="10" fill="#84548f" font-style="italic" textLength="51.2" lengthAdjust="spacingAndGlyphs" stroke="#fff" stroke-opacity=".75" stroke-width="1.6" paint-order="stroke" stroke-linejoin="round">Запорізька</text>
<text x="1283.2" y="164.9" font-size="10" fill="#84548f" font-style="italic" textLength="40.5" lengthAdjust="spacingAndGlyphs" stroke="#fff" stroke-opacity=".75" stroke-width="1.6" paint-order="stroke" stroke-linejoin="round">область</text>
<text x="1358.2" y="156.5" font-size="12.5" fill="#2b2b2b" font-style="normal" textLength="7.4" lengthAdjust="spacingAndGlyphs" stroke="#fff" stroke-opacity=".75" stroke-width="1.6" paint-order="stroke" stroke-linejoin="round">М</text>
<text x="1001.6" y="172.5" font-size="10.5" fill="#333" font-style="normal" textLength="52.1" lengthAdjust="spacingAndGlyphs" stroke="#fff" stroke-opacity=".75" stroke-width="1.6" paint-order="stroke" stroke-linejoin="round">Тирасполь</text>
<text x="1141.2" y="172.8" font-size="12.5" fill="#2b2b2b" font-style="normal" textLength="54.9" lengthAdjust="spacingAndGlyphs" stroke="#fff" stroke-opacity=".75" stroke-width="1.6" paint-order="stroke" stroke-linejoin="round">Миколаїв</text>
<text x="1259.9" y="187.4" font-size="10.5" fill="#333" font-style="normal" textLength="57.3" lengthAdjust="spacingAndGlyphs" stroke="#fff" stroke-opacity=".75" stroke-width="1.6" paint-order="stroke" stroke-linejoin="round">Мелітополь</text>
<text x="1327.4" y="195.3" font-size="10.5" fill="#333" font-style="normal" textLength="38.2" lengthAdjust="spacingAndGlyphs" stroke="#fff" stroke-opacity=".75" stroke-width="1.6" paint-order="stroke" stroke-linejoin="round">Бердян</text>
<text x="1051.4" y="191.0" font-size="10" fill="#84548f" font-style="italic" textLength="38.6" lengthAdjust="spacingAndGlyphs" stroke="#fff" stroke-opacity=".75" stroke-width="1.6" paint-order="stroke" stroke-linejoin="round">Одеська</text>
<text x="1050.4" y="202.6" font-size="10" fill="#84548f" font-style="italic" textLength="39.6" lengthAdjust="spacingAndGlyphs" stroke="#fff" stroke-opacity=".75" stroke-width="1.6" paint-order="stroke" stroke-linejoin="round">область</text>
<text x="1169.2" y="194.2" font-size="10" fill="#84548f" font-style="italic" textLength="52.6" lengthAdjust="spacingAndGlyphs" stroke="#fff" stroke-opacity=".75" stroke-width="1.6" paint-order="stroke" stroke-linejoin="round">Херсонська</text>
<text x="1174.7" y="206.3" font-size="10" fill="#84548f" font-style="italic" textLength="40.0" lengthAdjust="spacingAndGlyphs" stroke="#fff" stroke-opacity=".75" stroke-width="1.6" paint-order="stroke" stroke-linejoin="round">область</text>
<text x="1320.5" y="229.1" font-size="12.5" fill="#6a92c4" font-style="italic" textLength="45.2" lengthAdjust="spacingAndGlyphs" stroke="#fff" stroke-opacity=".75" stroke-width="1.6" paint-order="stroke" stroke-linejoin="round">Sea of A</text>
<text x="975.9" y="282.8" font-size="10.5" fill="#333" font-style="normal" textLength="28.9" lengthAdjust="spacingAndGlyphs" stroke="#fff" stroke-opacity=".75" stroke-width="1.6" paint-order="stroke" stroke-linejoin="round">Tulcea</text>
<text x="1217.1" y="271.5" font-size="10" fill="#84548f" font-style="italic" textLength="55.9" lengthAdjust="spacingAndGlyphs" stroke="#fff" stroke-opacity=".75" stroke-width="1.6" paint-order="stroke" stroke-linejoin="round">Автономна</text>
<text x="1220.4" y="283.6" font-size="10" fill="#84548f" font-style="italic" textLength="49.8" lengthAdjust="spacingAndGlyphs" stroke="#fff" stroke-opacity=".75" stroke-width="1.6" paint-order="stroke" stroke-linejoin="round">Республіка</text>
<text x="1233.4" y="295.2" font-size="10" fill="#84548f" font-style="italic" textLength="24.2" lengthAdjust="spacingAndGlyphs" stroke="#fff" stroke-opacity=".75" stroke-width="1.6" paint-order="stroke" stroke-linejoin="round">Крим</text>
<text x="1322.8" y="271.2" font-size="10.5" fill="#333" font-style="normal" textLength="30.3" lengthAdjust="spacingAndGlyphs" stroke="#fff" stroke-opacity=".75" stroke-width="1.6" paint-order="stroke" stroke-linejoin="round">Керчь</text>
<text x="1141.2" y="289.4" font-size="10.5" fill="#333" font-style="normal" textLength="52.1" lengthAdjust="spacingAndGlyphs" stroke="#fff" stroke-opacity=".75" stroke-width="1.6" paint-order="stroke" stroke-linejoin="round">Евпатория</text>
<text x="1166.8" y="317.1" font-size="12.5" fill="#2b2b2b" font-style="normal" textLength="74.5" lengthAdjust="spacingAndGlyphs" stroke="#fff" stroke-opacity=".75" stroke-width="1.6" paint-order="stroke" stroke-linejoin="round">Севастополь</text>
<text x="899.0" y="249.1" font-size="10.5" fill="#333" font-style="normal" textLength="33.7" lengthAdjust="spacingAndGlyphs" stroke="#fff" stroke-opacity=".75" stroke-width="1.6" paint-order="stroke" stroke-linejoin="round">Focșani</text>
<text x="939.2" y="276.3" font-size="10.5" fill="#333" font-style="normal" textLength="14.1" lengthAdjust="spacingAndGlyphs" stroke="#fff" stroke-opacity=".75" stroke-width="1.6" paint-order="stroke" stroke-linejoin="round">Bră</text>
<text x="980.0" y="158.3" font-size="13.5" fill="#7d3c8f" font-style="normal" textLength="29.3" lengthAdjust="spacingAndGlyphs" stroke="#fff" stroke-opacity=".75" stroke-width="1.6" paint-order="stroke" stroke-linejoin="round">dova</text>
<circle cx="645.7" cy="49.5" r="1.8" fill="#fff" stroke="#555" stroke-width=".8"/>
<circle cx="693.8" cy="56.6" r="1.8" fill="#fff" stroke="#555" stroke-width=".8"/>
<circle cx="624.7" cy="91.9" r="1.8" fill="#fff" stroke="#555" stroke-width=".8"/>
<circle cx="719.7" cy="112.7" r="1.8" fill="#fff" stroke="#555" stroke-width=".8"/>
<circle cx="751.8" cy="122.8" r="1.8" fill="#fff" stroke="#555" stroke-width=".8"/>
<circle cx="662.7" cy="131.0" r="1.8" fill="#fff" stroke="#555" stroke-width=".8"/>
<circle cx="676.9" cy="162.8" r="1.8" fill="#fff" stroke="#555" stroke-width=".8"/>
<circle cx="888.8" cy="52.9" r="1.8" fill="#fff" stroke="#555" stroke-width=".8"/>
<circle cx="891.5" cy="117.0" r="1.8" fill="#fff" stroke="#555" stroke-width=".8"/>
<circle cx="793.8" cy="157.8" r="1.8" fill="#fff" stroke="#555" stroke-width=".8"/>
<circle cx="878.5" cy="170.6" r="1.8" fill="#fff" stroke="#555" stroke-width=".8"/>
<circle cx="933.9" cy="156.0" r="1.8" fill="#fff" stroke="#555" stroke-width=".8"/>
<circle cx="638.9" cy="187.8" r="1.8" fill="#fff" stroke="#555" stroke-width=".8"/>
<circle cx="752.7" cy="181.9" r="1.8" fill="#fff" stroke="#555" stroke-width=".8"/>
<circle cx="595.8" cy="215.8" r="1.8" fill="#fff" stroke="#555" stroke-width=".8"/>
<circle cx="648.7" cy="220.8" r="1.8" fill="#fff" stroke="#555" stroke-width=".8"/>
<circle cx="573.6" cy="225.6" r="1.8" fill="#fff" stroke="#555" stroke-width=".8"/>
<circle cx="644.6" cy="249.0" r="1.8" fill="#fff" stroke="#555" stroke-width=".8"/>
<circle cx="720.9" cy="240.5" r="1.8" fill="#fff" stroke="#555" stroke-width=".8"/>
<circle cx="709.4" cy="320.7" r="1.8" fill="#fff" stroke="#555" stroke-width=".8"/>
<circle cx="609.0" cy="309.7" r="1.8" fill="#fff" stroke="#555" stroke-width=".8"/>
<circle cx="797.0" cy="196.8" r="1.8" fill="#fff" stroke="#555" stroke-width=".8"/>
<circle cx="903.7" cy="195.9" r="1.8" fill="#fff" stroke="#555" stroke-width=".8"/>
<circle cx="938.0" cy="217.6" r="1.8" fill="#fff" stroke="#555" stroke-width=".8"/>
<circle cx="852.8" cy="241.9" r="1.8" fill="#fff" stroke="#555" stroke-width=".8"/>
<circle cx="844.8" cy="255.9" r="1.8" fill="#fff" stroke="#555" stroke-width=".8"/>
<circle cx="916.0" cy="252.7" r="1.8" fill="#fff" stroke="#555" stroke-width=".8"/>
<circle cx="787.8" cy="290.7" r="1.8" fill="#fff" stroke="#555" stroke-width=".8"/>
<circle cx="900.0" cy="287.7" r="1.8" fill="#fff" stroke="#555" stroke-width=".8"/>
<circle cx="862.9" cy="301.2" r="1.8" fill="#fff" stroke="#555" stroke-width=".8"/>
<circle cx="810.9" cy="306.7" r="1.8" fill="#fff" stroke="#555" stroke-width=".8"/>
<circle cx="951.8" cy="279.9" r="1.8" fill="#fff" stroke="#555" stroke-width=".8"/>
<circle cx="1198.5" cy="104.5" r="1.8" fill="#fff" stroke="#555" stroke-width=".8"/>
<circle cx="1276.0" cy="109.0" r="1.8" fill="#fff" stroke="#555" stroke-width=".8"/>
<circle cx="1028.0" cy="176.6" r="1.8" fill="#fff" stroke="#555" stroke-width=".8"/>
<circle cx="1135.6" cy="168.3" r="1.8" fill="#fff" stroke="#555" stroke-width=".8"/>
<circle cx="1288.8" cy="176.2" r="1.8" fill="#fff" stroke="#555" stroke-width=".8"/>
<circle cx="1353.0" cy="182.7" r="1.8" fill="#fff" stroke="#555" stroke-width=".8"/>
<circle cx="1197.0" cy="285.0" r="1.8" fill="#fff" stroke="#555" stroke-width=".8"/>
<circle cx="1205.5" cy="322.4" r="1.8" fill="#fff" stroke="#555" stroke-width=".8"/>
<circle cx="1337.7" cy="273.5" r="1.8" fill="#fff" stroke="#555" stroke-width=".8"/>
<circle cx="992.0" cy="288.4" r="1.8" fill="#fff" stroke="#555" stroke-width=".8"/>
<path d="M975.0 193.5 L971.0 197.5 L966.0 200.0 L963.7 205.0 L962.0 215.0 L961.3 232.0" fill="none" stroke="#5a5af2" stroke-width="3.4" stroke-linejoin="round" stroke-linecap="round" />
<g transform="translate(922.4 86.0)"><rect x=".8" y=".8" width="15.9" height="15.9" fill="#fff" stroke="#0b63c5" stroke-width="1.6"/>
<rect x="1.6" y="1.6" width="14.3" height="14.3" fill="#0b63c5"/>
</g>
<g transform="translate(915.0 81.0)"><rect x=".8" y=".8" width="17.4" height="17.4" fill="#fff" stroke="#1e9a23" stroke-width="1.6"/>
<rect x="4.2" y="3.6" width="7" height="11" fill="#1e9a23"/><rect x="5.6" y="5" width="4.2" height="3.2" fill="#fff"/><path d="M11.5 9 H13 V13 Q14 14 14.6 13 V6.5 L13 4.8" fill="none" stroke="#1e9a23" stroke-width="1.2"/><rect x="3.4" y="14" width="8.6" height="1.4" fill="#1e9a23"/>
</g>
<text x="917.0" y="111.5" font-family="Liberation Sans, sans-serif" font-size="12.5" fill="#ee2d5c" stroke="#fff" stroke-width="2" stroke-opacity=".8" paint-order="stroke">43</text>
<text x="924.0" y="119.5" font-family="Liberation Sans, sans-serif" font-size="12.5" fill="#ee2d5c" stroke="#fff" stroke-width="2" stroke-opacity=".8" paint-order="stroke">37</text>
<g transform="translate(940.0 106.0)"><rect x=".8" y=".8" width="16.4" height="16.4" fill="#fff" stroke="#0b63c5" stroke-width="1.6"/>
<rect x="1.6" y="1.6" width="14.8" height="14.8" fill="#0b63c5"/>
</g>
<g transform="translate(936.4 107.0)"><rect x=".8" y=".8" width="17.4" height="17.4" fill="#fff" stroke="#ee2d5c" stroke-width="1.6"/>
<path d="M3.2 12.2 A6.2 6.2 0 1 1 15.3 12.2 Z" fill="none" stroke="#ee2d5c" stroke-width="1.4"/><path d="M3 12.4 C5 9.5 7.5 11.5 9 10.5 L12.6 6 L11 11 C12.5 10.5 14.5 11 15.5 12.4 A6.3 6.3 0 0 1 3 12.4 Z" fill="#ee2d5c"/>
</g>
<g transform="translate(951.0 118.0)"><rect x=".8" y=".8" width="10.4" height="10.4" fill="#fff" stroke="#ee2d5c" stroke-width="1.6"/>
</g>
<text x="940.5" y="138.5" font-family="Liberation Sans, sans-serif" font-size="12.5" fill="#ee2d5c" stroke="#fff" stroke-width="2" stroke-opacity=".8" paint-order="stroke">19</text>
<text x="946.0" y="149.5" font-family="Liberation Sans, sans-serif" font-size="12.5" fill="#ee2d5c" stroke="#fff" stroke-width="2" stroke-opacity=".8" paint-order="stroke">18</text>
<g transform="translate(962.0 131.4)"><rect x=".8" y=".8" width="17.4" height="17.4" fill="#fff" stroke="#ee2d5c" stroke-width="1.6"/>
</g>
<g transform="translate(958.7 131.4)"><rect x=".8" y=".8" width="17.4" height="17.4" fill="#fff" stroke="#ee2d5c" stroke-width="1.6"/>
<path d="M3.2 12.2 A6.2 6.2 0 1 1 15.3 12.2 Z" fill="none" stroke="#ee2d5c" stroke-width="1.4"/><path d="M3 12.4 C5 9.5 7.5 11.5 9 10.5 L12.6 6 L11 11 C12.5 10.5 14.5 11 15.5 12.4 A6.3 6.3 0 0 1 3 12.4 Z" fill="#ee2d5c"/>
</g>
<ellipse cx="983" cy="153" rx="7" ry="9" fill="#ee2d5c"/>
<text x="957.0" y="161.0" font-family="Liberation Sans, sans-serif" font-size="12.5" fill="#ee2d5c" stroke="#fff" stroke-width="2" stroke-opacity=".8" paint-order="stroke">42</text>
<text x="964.5" y="161.0" font-family="Liberation Sans, sans-serif" font-size="12.5" fill="#ee2d5c" stroke="#fff" stroke-width="2" stroke-opacity=".8" paint-order="stroke">21</text>
<text x="972.0" y="161.0" font-family="Liberation Sans, sans-serif" font-size="12.5" fill="#ee2d5c" stroke="#fff" stroke-width="2" stroke-opacity=".8" paint-order="stroke">17</text>
<g transform="translate(979.0 154.5)"><rect x=".8" y=".8" width="16.4" height="16.4" fill="#fff" stroke="#0b63c5" stroke-width="1.6"/>
<rect x="1.6" y="1.6" width="14.8" height="14.8" fill="#0b63c5"/>
</g>
<g transform="translate(980.0 153.4)"><rect x=".8" y=".8" width="16.9" height="16.9" fill="#fff" stroke="#0b63c5" stroke-width="1.6"/>
<rect x="1.6" y="1.6" width="15.3" height="15.3" fill="#0b63c5"/><text x="9.25" y="13.55" font-family="Liberation Sans, sans-serif" font-weight="bold" font-size="12" fill="#fff" text-anchor="middle">P</text>
</g>
<g transform="translate(976.0 171.0)"><rect x=".8" y=".8" width="17.4" height="17.4" fill="#fff" stroke="#0b63c5" stroke-width="1.6"/>
</g>
<g transform="translate(972.5 172.0)"><rect x=".8" y=".8" width="17.4" height="17.4" fill="#fff" stroke="#ee2d5c" stroke-width="1.6"/>
</g>
<g transform="translate(973.5 174.5)"><rect x=".8" y=".8" width="17.4" height="17.4" fill="#fff" stroke="#ee2d5c" stroke-width="1.6"/>
<path d="M3.2 12.2 A6.2 6.2 0 1 1 15.3 12.2 Z" fill="none" stroke="#ee2d5c" stroke-width="1.4"/><path d="M3 12.4 C5 9.5 7.5 11.5 9 10.5 L12.6 6 L11 11 C12.5 10.5 14.5 11 15.5 12.4 A6.3 6.3 0 0 1 3 12.4 Z" fill="#ee2d5c"/>
</g>
<text x="977.0" y="207.0" font-family="Liberation Sans, sans-serif" font-size="12.5" fill="#ee2d5c" stroke="#fff" stroke-width="2" stroke-opacity=".8" paint-order="stroke">16</text>
<g transform="translate(971.0 222.0)"><rect x=".8" y=".8" width="17.4" height="17.4" fill="#fff" stroke="#ee2d5c" stroke-width="1.6"/>
</g>
<g transform="translate(970.5 231.0)"><rect x=".8" y=".8" width="17.4" height="17.4" fill="#fff" stroke="#ee2d5c" stroke-width="1.6"/>
</g>
<text x="974.0" y="240.5" font-family="Liberation Sans, sans-serif" font-size="12.5" fill="#ee2d5c" stroke="#fff" stroke-width="2" stroke-opacity=".8" paint-order="stroke">24</text>
<text x="974.0" y="252.5" font-family="Liberation Sans, sans-serif" font-size="12.5" fill="#ee2d5c" stroke="#fff" stroke-width="2" stroke-opacity=".8" paint-order="stroke">22</text>
<text x="973.5" y="263.0" font-family="Liberation Sans, sans-serif" font-size="12.5" fill="#ee2d5c" stroke="#fff" stroke-width="2" stroke-opacity=".8" paint-order="stroke">12</text>
<g transform="translate(953.0 254.0)"><rect x=".8" y=".8" width="19.4" height="19.4" fill="#fff" stroke="#0b63c5" stroke-width="1.6"/>
</g>
<g transform="translate(952.8 231.5)"><rect x=".8" y=".8" width="16.4" height="16.4" fill="#fff" stroke="#1e9a23" stroke-width="1.6"/>
</g>
<path d="M956 246 L961 236.5 L966 246 Z M955.5 246.5 H967 V248.5 H955.5 Z" fill="#1e9a23"/>
<text x="956.0" y="256.5" font-family="Liberation Sans, sans-serif" font-size="12.5" fill="#ee2d5c" stroke="#fff" stroke-width="2" stroke-opacity=".8" paint-order="stroke">41</text>
<g transform="translate(956.0 258.0)"><rect x=".8" y=".8" width="17.4" height="17.4" fill="#fff" stroke="#ee2d5c" stroke-width="1.6"/>
<path d="M3.2 12.2 A6.2 6.2 0 1 1 15.3 12.2 Z" fill="none" stroke="#ee2d5c" stroke-width="1.4"/><path d="M3 12.4 C5 9.5 7.5 11.5 9 10.5 L12.6 6 L11 11 C12.5 10.5 14.5 11 15.5 12.4 A6.3 6.3 0 0 1 3 12.4 Z" fill="#ee2d5c"/>
</g>
<text x="959.0" y="289.0" font-family="Liberation Sans, sans-serif" font-size="12.5" fill="#ee2d5c" stroke="#fff" stroke-width="2" stroke-opacity=".8" paint-order="stroke">13</text>
<text x="959.5" y="293.0" font-family="Liberation Sans, sans-serif" font-size="9" fill="#ee2d5c" stroke="#fff" stroke-width="2" stroke-opacity=".8" paint-order="stroke">33</text>
<path d="M992.3 184.5 L994.6 204 L989.5 199.5 L983.8 199 Z" fill="#2fe62f" stroke="#136b13" stroke-width=".8" stroke-linejoin="round"/>
<g transform="translate(967 207.5)"><path d="M17.4 2.1L31.5 4.2V10.6L17.4 10.4Z" fill="#d6232b"/><path d="M17.4 2.1L31.5 4.2" stroke="#7a1016" stroke-width=".7"/><path d="M20 3.4V10M23 3.8V10M26 4.2V10M29 4.6V10" stroke="#e8636a" stroke-width=".6"/><path d="M8 1.2L17.4 1.8V12L8.3 13.2Z" fill="#c81e26"/><path d="M10.4 2.8H14.4V6.2H10.4Z" fill="#2c4a38"/><path d="M.3 1L8 1.2L8.3 13.2L.6 11.6Z" fill="#d8262e"/><path d="M.2 .3L8.2 .7L17.4 1.3V2.2L8 1.9L.3 1.6Z" fill="#151515"/><path d="M1 2.5L7.6 2.7V6.1L1.2 5.9Z" fill="#dfe8ee"/><path d="M1.2 3.2L4 3.4L3 5.2L1.3 5Z" fill="#f8fbfd"/><path d="M1.6 8H5.2V9.4H1.6Z" fill="#5c1216"/><path d="M.4 11.4L8.3 13V16.2L.9 14.4Z" fill="#1b1b1b"/><path d="M6.4 13.7L8.4 14.1V15.3L6.4 14.9Z" fill="#e8c020"/><path d="M8.3 12.4L30 10.4V13.4L8.3 16.4Z" fill="#222"/><ellipse cx="14.6" cy="14.9" rx="2.4" ry="3.1" fill="#0e0e0e"/><ellipse cx="14.4" cy="15" rx="1" ry="1.4" fill="#c8c8c8"/><ellipse cx="21.6" cy="13.5" rx="1.9" ry="2.5" fill="#0e0e0e"/><ellipse cx="21.5" cy="13.6" rx=".8" ry="1.1" fill="#bbb"/><ellipse cx="26.6" cy="12.9" rx="1.8" ry="2.3" fill="#0e0e0e"/><ellipse cx="26.5" cy="13" rx=".7" ry="1" fill="#bbb"/></g>
<path d="M966 239.5 Q966 234 975 234.5 Q1000 232.5 1030 234 Q1036 235 1034.5 240 Q1030 244.5 1012 244 Q1000 246.5 985 245.5 Q968 246 966 239.5 Z" fill="#fff"/>
<text x="931.2" y="245.3" font-family="Liberation Sans, sans-serif" font-weight="bold" font-size="13.5" fill="#e8141c" stroke="#fff" stroke-width="1.5" paint-order="stroke" stroke-opacity=".7">DAF</text>
<text x="1137.8" y="311.3" font-family="DejaVu Sans, sans-serif" font-weight="bold" font-size="12.2" fill="#000" textLength="222.5" lengthAdjust="spacingAndGlyphs" stroke="#fff" stroke-width="1.2" stroke-opacity=".6" paint-order="stroke">N 46° 06.9559' : E 034° 04.8110'</text>
<path d="M564.5 281 V312 M564.5 296.7 H662 M625.8 281 V296.7 M662 296.7 V312" stroke="#000" stroke-width="1.8" fill="none"/>
<text x="570.8" y="292.6" font-family="DejaVu Sans, sans-serif" font-weight="bold" font-size="12" fill="#000" textLength="49" lengthAdjust="spacingAndGlyphs">100 km</text>
<text x="590.8" y="309.8" font-family="DejaVu Sans, sans-serif" font-weight="bold" font-size="12" fill="#000" textLength="45.3" lengthAdjust="spacingAndGlyphs">100 mi</text>
<rect x="576" y="191" width="10" height="140" rx="3" fill="#777" fill-opacity=".8"/>
<rect x="568" y="48" width="27" height="27" rx="3" fill="#fff" fill-opacity=".92" stroke="#000" stroke-opacity=".08" stroke-width="1"/>
<rect x="568" y="90" width="27" height="27" rx="3" fill="#fff" fill-opacity=".92" stroke="#000" stroke-opacity=".08" stroke-width="1"/>
<rect x="568" y="129.5" width="27" height="52" rx="3" fill="#fff" fill-opacity=".92" stroke="#000" stroke-opacity=".08" stroke-width="1"/>
<path d="M568 155.5 H595" stroke="#ddd" stroke-width="1"/>
<path d="M573.6 61.5 Q581.5 53.5 589.4 61.5 Q581.5 69.5 573.6 61.5 Z" fill="none" stroke="#777" stroke-width="1.2"/><circle cx="581.5" cy="61" r="3.4" fill="#777"/><circle cx="580.6" cy="60" r="1.1" fill="#fff"/>
<path d="M573.5 98.5 L578 97 V108 L573.5 109.5 Z M579 97 L584 98.5 V109.5 L579 108 Z M585 98.5 L589.5 97 V108 L585 109.5 Z" fill="#777"/>
<path d="M576.5 142 H586.5 M581.5 137 V147" stroke="#777" stroke-width="1.6"/><path d="M576.5 168.5 H586.5" stroke="#777" stroke-width="1.6"/>
</svg>
<!--/map--></div>
<div id="tp">
<div id="tb">
<svg class="abs" style="left:7px;top:11px" width="11" height="10" viewBox="0 0 11 10"><path d="M5 .7L1 5L5 9.3M10 .7L6 5L10 9.3" fill="none" stroke="#9a9a9a" stroke-width="1.1"/></svg><svg class="abs" style="left:37px;top:11px" width="7" height="10" viewBox="0 0 7 10"><path d="M5.5 .7L1.5 5L5.5 9.3" fill="none" stroke="#9a9a9a" stroke-width="1.1"/></svg>
<div class="abs" style="left:57px;top:4px;width:31px;height:22px;border:1px solid #c8c8c8;background:#eeeee8;color:#999;font-size:12px;line-height:20px;text-align:center">1</div>
<div class="abs" style="left:92px;top:4px;line-height:22px;font-size:12px">из 1</div>
<svg class="abs" style="left:127px;top:11px" width="7" height="10" viewBox="0 0 7 10"><path d="M1.5 .7L5.5 5L1.5 9.3" fill="none" stroke="#9a9a9a" stroke-width="1.1"/></svg><svg class="abs" style="left:153px;top:11px" width="11" height="10" viewBox="0 0 11 10"><path d="M1 .7L5 5L1 9.3M6 .7L10 5L6 9.3" fill="none" stroke="#9a9a9a" stroke-width="1.1"/></svg>
<div class="tsep" style="left:170px"></div>
<div class="abs" style="left:185px;top:4px;line-height:22px;font-size:12px">Строки с 1 по 4 из 4</div>
<div class="tsep" style="left:310px"></div>
<div class="sel" style="left:325px;top:4px;width:46px;height:22px;line-height:20px;padding-left:6px;border-color:#c8c8c8">50</div>
<div class="tsep" style="left:385px"></div>
<div class="tsep" style="left:461px;top:0;height:30px"></div>
<div class="tsep" style="left:500px;top:0;height:30px"></div>
<div class="tsep" style="left:577px;top:0;height:30px"></div>
<div class="tsep" style="left:616px;top:0;height:30px"></div>
<div class="tsep" style="left:655px;top:0;height:30px"></div>
<div class="tsep" style="left:735px;top:0;height:30px"></div>
<svg class="abs" style="left:474px;top:7px" width="15" height="17" viewBox="0 0 15 17"><rect x=".7" y=".7" width="13.3" height="15.4" fill="#fff" stroke="#333" stroke-width="1.3"/><rect x=".7" y=".7" width="13.3" height="3.2" fill="#333"/><path d="M3.5 8H11.3M3.5 11.5H11.3" stroke="#333" stroke-width="1.3"/></svg>
<svg class="abs" style="left:513px;top:7px" width="15" height="17" viewBox="0 0 15 17"><path d="M.7 .7H9.5L14 5.2V16.2H.7Z" fill="#fff" stroke="#e8333f" stroke-width="1.3" stroke-linejoin="round"/><path d="M9.5 .7V5.2H14" fill="none" stroke="#e8333f" stroke-width="1.1"/><path d="M3.2 13.4C5.6 12.2 7 9.4 7 6.2C7 9.2 9 11.6 11.6 11.6C8.8 11.2 5.6 12 3.2 13.4Z" fill="none" stroke="#e8333f" stroke-width="1.3" stroke-linejoin="round"/></svg>
<svg class="abs" style="left:551px;top:7px" width="15" height="17" viewBox="0 0 15 17"><path d="M.7 .7H9.5L14 5.2V16.2H.7Z" fill="#fff" stroke="#4daf50" stroke-width="1.3" stroke-linejoin="round"/><path d="M9.5 .7V5.2H14" fill="none" stroke="#4daf50" stroke-width="1.1"/><path d="M4.6 7.4L9.8 13.6M9.8 7.4L4.6 13.6" stroke="#4daf50" stroke-width="1.5"/></svg>
<svg class="abs" style="left:590px;top:7px" width="15" height="17" viewBox="0 0 15 17"><path d="M.7 .7H9.5L14 5.2V16.2H.7Z" fill="#fff" stroke="#444" stroke-width="1.3" stroke-linejoin="round"/><path d="M9.5 .7V5.2H14" fill="none" stroke="#444" stroke-width="1.1"/><path d="M11 10.6H5.4" stroke="#333" stroke-width="1.8"/><path d="M3.6 10.6L7 7.6V13.6Z" fill="#333"/></svg>
<svg class="abs" style="left:627px;top:7px" width="19" height="18" viewBox="0 0 19 18"><path d="M4.6 6V.8H14.4V6" fill="#fff" stroke="#444" stroke-width="1.3"/><rect x=".8" y="6" width="17.4" height="7.6" rx="1.6" fill="#fff" stroke="#444" stroke-width="1.4"/><rect x="4.6" y="10.6" width="9.8" height="6.4" fill="#fff" stroke="#444" stroke-width="1.3"/><path d="M6.4 13.8H12.6" stroke="#444" stroke-width="1.2"/><rect x="14" y="7.8" width="2" height="1.4" fill="#444"/></svg>
<div class="abs" style="left:662px;top:4px;width:64px;height:22px;border:1px solid #c8c8c8;border-radius:3px;background:#fff;color:#2a6496;font-size:12px;line-height:20px;text-align:center">Очистить</div>
<div class="abs" style="left:740px;top:4px;width:62px;height:22px;border:1px solid #c8c8c8;border-radius:4px;background:#fff"><div class="abs" style="left:30px;top:0;width:30px;height:20px;background:#eaeaea;border-left:1px solid #c8c8c8;border-radius:0 3px 3px 0"></div><svg class="abs" style="left:7px;top:4px" width="17" height="13" viewBox="0 0 17 13"><path d="M.7 2.2L5.8 .7L11.2 2.2L16.3 .7V10.8L11.2 12.3L5.8 10.8L.7 12.3Z M5.8 .7V10.8M11.2 2.2V12.3" fill="none" stroke="#444" stroke-width="1.2" stroke-linejoin="round"/></svg>
<svg class="abs" style="left:38px;top:4px" width="15" height="13" viewBox="0 0 15 13"><rect x=".7" y=".7" width="13.6" height="11.6" fill="none" stroke="#aaa" stroke-width="1.3"/><path d="M.7 6.5H14.3" stroke="#aaa" stroke-width="1.3"/></svg></div>
</div>
<div class="abs" style="left:0;top:32px;width:811px;height:24px;background:linear-gradient(#fafafa,#ececec)"></div>
<div class="th" style="left:0px;width:33px">№</div>
<div class="th" style="left:33px;width:132px">Время</div>
<div class="th" style="left:165px;width:147px">Положение</div>
<div class="th" style="left:312px;width:90px">Нач. уровень</div>
<div class="th" style="left:402px;width:85px">Заправлено</div>
<div class="th" style="left:487px;width:104px">Конеч. уровень</div>
<div class="th" style="left:591px;width:88px">Имя датчика</div>
<div class="tr" style="top:59px">
<div class="td" style="left:0px;width:33px">1</div>
<div class="td b" style="left:33px;width:132px">27 дек 2017 19:27:27</div>
<div class="td b" style="left:165px;width:147px">Cahul, Șoseaua Griviței</div>
<div class="td" style="left:312px;width:90px">146 л</div>
<div class="td" style="left:402px;width:85px">278 л</div>
<div class="td" style="left:487px;width:104px">424 л</div>
<div class="td" style="left:591px;width:88px">ДУТ (430 )</div>
</div>
<div class="tr" style="top:79px">
<div class="td" style="left:0px;width:33px">2</div>
<div class="td b" style="left:33px;width:132px">28 дек 2017 16:06:47</div>
<div class="td b" style="left:165px;width:147px">Cahul, Șoseaua Griviței</div>
<div class="td" style="left:312px;width:90px">140 л</div>
<div class="td" style="left:402px;width:85px">280 л</div>
<div class="td" style="left:487px;width:104px">420 л</div>
<div class="td" style="left:591px;width:88px">ДУТ (430 )</div>
</div>
<div class="tr" style="top:99px">
<div class="td" style="left:0px;width:33px">3</div>
<div class="td b" style="left:33px;width:132px">02 янв 2018 10:25:41</div>
<div class="td b" style="left:165px;width:147px">L46, Cupcini</div>
<div class="td" style="left:312px;width:90px">209 л</div>
<div class="td" style="left:402px;width:85px">220 л</div>
<div class="td" style="left:487px;width:104px">429 л</div>
<div class="td" style="left:591px;width:88px">ДУТ (430 )</div>
</div>
<div class="tr" style="top:119px">
<div class="td" style="left:0px;width:33px">4</div>
<div class="td b" style="left:33px;width:132px">04 янв 2018 09:22:05</div>
<div class="td b" style="left:165px;width:147px">Cahul, Șoseaua Griviței</div>
<div class="td" style="left:312px;width:90px">180 л</div>
<div class="td" style="left:402px;width:85px">241 л</div>
<div class="td" style="left:487px;width:104px">420 л</div>
<div class="td" style="left:591px;width:88px">ДУТ (430 )</div>
</div>
<div class="abs" style="left:0;top:266px;width:811px;height:27px;background:#f5f5f5;border-top:1px solid #d0d0d0;border-bottom:1px solid #ddd"></div>
<div class="tr tf" style="top:267px">
<div class="td" style="left:0px;width:33px">-----</div>
<div class="td" style="left:33px;width:132px">04 янв 2018 09:22:05</div>
<div class="td" style="left:165px;width:147px">Cahul, Șoseaua Griviței</div>
<div class="td" style="left:312px;width:90px">146 л</div>
<div class="td" style="left:402px;width:85px">1019 л</div>
<div class="td" style="left:487px;width:104px">420 л</div>
<div class="td" style="left:591px;width:88px">ДУТ (430 )</div>
</div>
</div>
<div id="bot">
<div class="abs" style="left:39px;top:0;width:1px;height:25px;background:#b5b6b8"></div>
<div class="abs" style="left:74px;top:0;width:1px;height:25px;background:#b5b6b8"></div>
<svg class="abs" style="left:11px;top:6px" width="17" height="15" viewBox="0 0 17 15"><rect x=".75" y=".75" width="15.5" height="13.5" fill="none" stroke="#fff" stroke-width="1.5"/><rect x="1" y="1" width="4.5" height="13" fill="#fff"/></svg>
<svg class="abs" style="left:49px;top:6px" width="16" height="15" viewBox="0 0 16 15"><g fill="#c3c4c6"><rect x="0" y="0" width="4.6" height="4.2"/><rect x="5.6" y="0" width="4.6" height="4.2"/><rect x="11.2" y="0" width="4.6" height="4.2"/><rect x="0" y="5.2" width="4.6" height="4.2"/><rect x="5.6" y="5.2" width="4.6" height="4.2"/><rect x="11.2" y="5.2" width="4.6" height="4.2"/><rect x="0" y="10.4" width="4.6" height="4.2"/><rect x="5.6" y="10.4" width="4.6" height="4.2"/><rect x="11.2" y="10.4" width="4.6" height="4.2"/></g></svg>
<div class="abs" style="left:0;top:0;width:1102px;text-align:center;line-height:30px;font-weight:bold;font-size:12px;color:#fff">© www.viatec.md</div>
<div class="abs" style="left:1032px;top:0;width:1px;height:25px;background:#b5b6b8"></div>
<div class="abs" style="left:1202px;top:0;width:1px;height:25px;background:#b5b6b8"></div>
<div class="abs" style="left:1243px;top:0;width:1px;height:25px;background:#b5b6b8"></div>
<svg class="abs" style="left:1044px;top:6px" width="18" height="15" viewBox="0 0 18 15"><rect x="0" y="0" width="18" height="15" fill="#c3c4c6"/><rect x="0" y="0" width="18" height="3" fill="#b3b4b6"/><path d="M3 7H15M3 10.5H11" stroke="#9d9ea1" stroke-width="1.6"/></svg>
<div class="bdg" style="left:1066px">0</div>
<svg class="abs" style="left:1095px;top:6px" width="24" height="15" viewBox="0 0 24 15"><path d="M0 0H18V6L22 9.5L16 15V12H10V13H0Z" fill="#c3c4c6"/><path d="M1 1L9 7.5L17 1" stroke="#9d9ea1" stroke-width="1.6" fill="none"/><path d="M11 9.5H17" stroke="#9d9ea1" stroke-width="1.6"/></svg>
<div class="bdg" style="left:1122px">0</div>
<svg class="abs" style="left:1151px;top:6px" width="18" height="15" viewBox="0 0 18 15"><rect x="0" y="0" width="18" height="15" fill="#c3c4c6"/><path d="M2 13L7 7L10.5 11L13 8.5L16 13Z" fill="#9d9ea1"/><circle cx="12.5" cy="4.5" r="1.7" fill="#9d9ea1"/></svg>
<div class="bdg" style="left:1172px">0</div>
<svg class="abs" style="left:1213px;top:8px" width="20" height="11" viewBox="0 0 20 11"><rect x="0" y="0" width="8.5" height="11" fill="#b4b5b8"/><rect x="9.5" y="0" width="10.5" height="11" fill="#b4b5b8"/><path d="M1.5 3H7M1.5 5.5H7M1.5 8H7" stroke="#9d9ea1" stroke-width="1"/></svg>
<div class="abs" style="left:1244px;top:0;width:120px;text-align:center;line-height:29px;font-size:12px;color:#fff">10:42:15 (+02)</div>
</div>
<svg id="anno" class="abs" style="left:0;top:0;pointer-events:none" width="1366" height="655" viewBox="0 0 1366 655">
<ellipse cx="453.75" cy="16.5" rx="42" ry="13.3" fill="none" stroke="#f00" stroke-width="4"/>
<path d="M542 375.6 H222" stroke="#f00" stroke-width="3.4" fill="none"/>
<path d="M216 375.6 L228 368.2 L224.5 375.6 L228 383 Z" fill="#f00"/>
<rect x="583" y="384" width="657.2" height="100" rx="24" ry="24" fill="none" stroke="#f00" stroke-width="4.8"/>
<path d="M670.7 533.5 V494" stroke="#f00" stroke-width="3.6" fill="none"/>
<path d="M670.6 486 L663 498.2 L670.6 493.5 L678.2 498.2 Z" fill="#f00"/>
<text x="589" y="556" font-family="Liberation Sans, sans-serif" font-size="34.5" font-weight="bold" font-style="italic" fill="#9a9a9a" stroke="#9a9a9a" stroke-width=".8" textLength="165" lengthAdjust="spacingAndGlyphs">заправки</text>
<text x="587" y="553.8" font-family="Liberation Sans, sans-serif" font-size="34.5" font-weight="bold" font-style="italic" fill="#000080" stroke="#000080" stroke-width=".8" textLength="165" lengthAdjust="spacingAndGlyphs">заправки</text>
</svg>
</body></html>
